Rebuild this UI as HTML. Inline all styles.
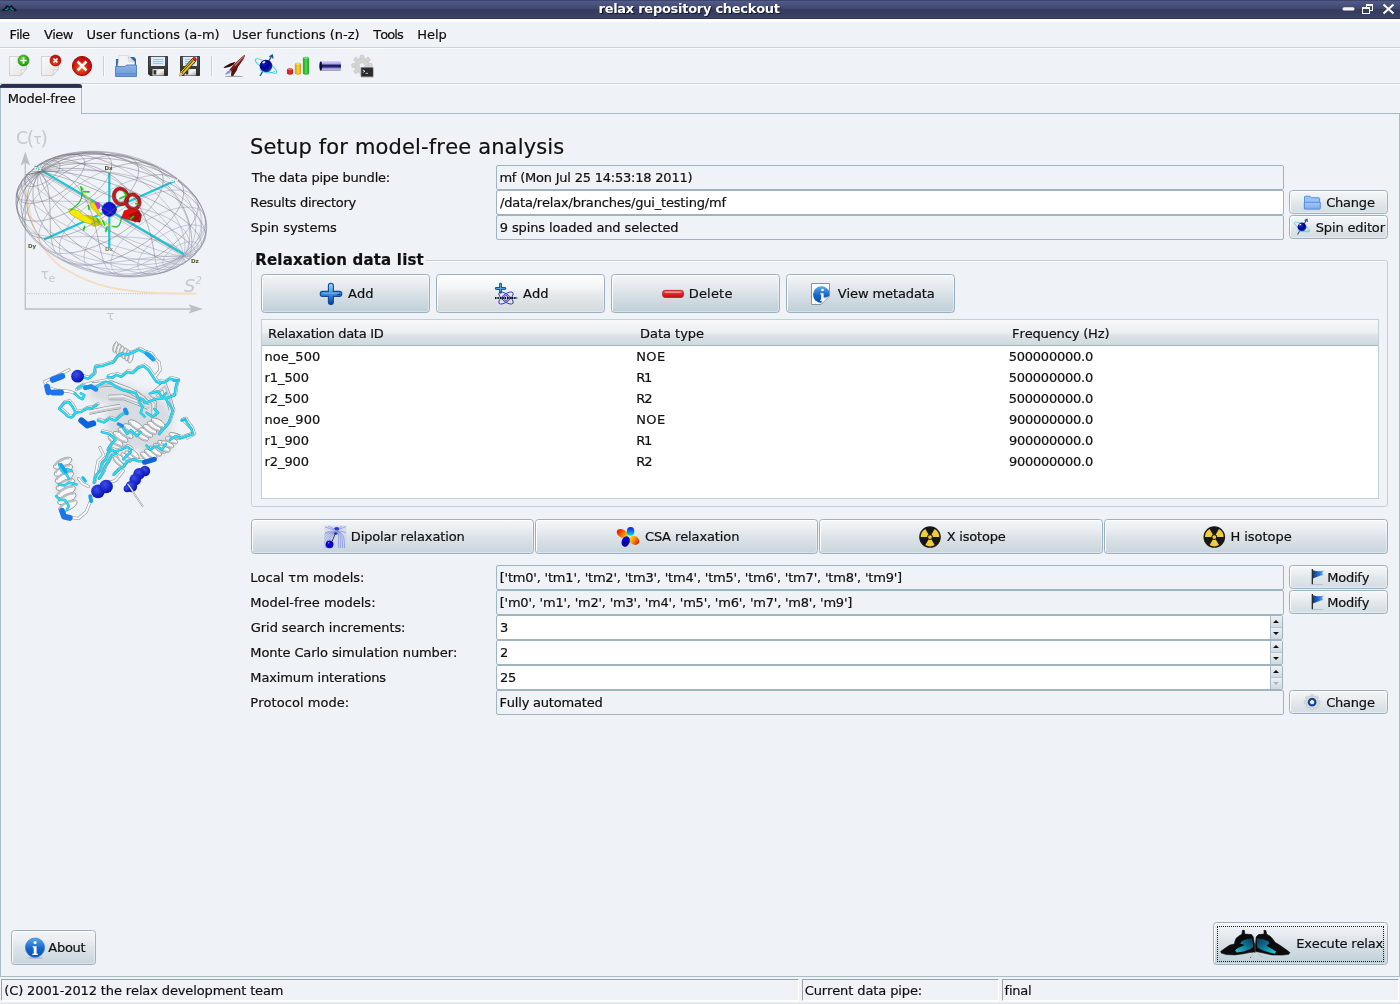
<!DOCTYPE html>
<html><head><meta charset="utf-8"><title>relax repository checkout</title>
<style>
html,body{margin:0;padding:0}
body{width:1400px;height:1004px;overflow:hidden;background:#eff2f7;font-family:"DejaVu Sans","Liberation Sans",sans-serif;font-size:13px;color:#101010;position:relative;font-kerning:none}
.abs,.t,.field,.btn,.sb,.spin{position:absolute}
#root{position:absolute;left:0;top:0;width:1400px;height:1004px;will-change:transform}
.t{white-space:nowrap;-webkit-text-stroke:.2px currentColor}
#titlebar{left:0;top:0;width:1400px;height:19px;background:linear-gradient(#3e4569 0,#3e4569 1px,#515b8c 1px,#48507c 5px,#3f466c 9px,#353b5d 9.5px,#383e62 14px,#3e456a 18px,#30365a 18px,#30365a 19px)}
.hline{left:0;width:1400px;height:1px}
.field{left:496px;width:786px;height:23px;border:1px solid #9fb3c1;border-radius:2px;background:#eff2f7}
.field.w{background:#fff}
.btn{border:1px solid #9bb0c0;border-radius:3.5px;background:linear-gradient(#f3f5f8 0,#e6eaee 30%,#d9e1e7 50%,#bfcfd7 100%);box-sizing:border-box;box-shadow:inset 1px 1px 0 #fff,inset -1px -1px 0 rgba(255,255,255,.35)}
.sb{height:22px;box-sizing:border-box;border-top:1px solid #9da2a6;border-left:1px solid #9da2a6;border-right:1px solid #fff;border-bottom:1px solid #fff}
.spin{left:1270px;width:11px;height:23px;border-left:1px solid #a9bac6;background:linear-gradient(#eef1f4 0,#d3dbe0 11px,#b9c6ce 11px,#b9c6ce 12px,#eceff2 12px,#d0d9de 23px)}
.spin i{position:absolute;left:2px;width:0;height:0;border-left:3.5px solid transparent;border-right:3.5px solid transparent}
.spin .up{top:3.500px;border-bottom:3.500px solid #111}
.spin .dn{top:15.500px;border-top:3.500px solid #111}
.spin .dn.dis{border-top-color:#a9b6be}
.field.s{width:785px}
</style></head><body>
<div id="root">
<div id="titlebar" class="abs"></div>
<div class="abs" style="left:0;top:19px;width:1400px;height:3px;background:#fff"></div>
<div class="t" style="left:598.51px;top:1px;font-size:13px;line-height:15px;letter-spacing:-0.276px;font-weight:bold;color:#fff;text-shadow:1px 1px 0 #14172c;-webkit-text-stroke:0;">relax repository checkout</div>
<svg class="abs" style="left:0;top:0" width="1400" height="19" viewBox="0 0 1400 19">
<g fill="none" stroke="#fff">
<rect x="1342.5" y="7.3" width="12" height="3.2" rx="1.6" fill="#f4f4f6" stroke="none"/>
<rect x="1366.5" y="4.5" width="6" height="6" stroke-width="1"/><rect x="1366" y="4" width="7" height="2" fill="#fff" stroke="none"/>
<rect x="1362.5" y="7.8" width="7" height="5.7" fill="#363c5f" stroke-width="1"/><rect x="1362" y="7.3" width="8" height="1.6" fill="#fff" stroke="none"/>
<path d="M1383.5 4.5 L1393.5 13.5 M1393.5 4.5 L1383.5 13.5" stroke-width="2"/>
</g>
<use href="#bfly" transform="translate(2 5) scale(.214 .232) translate(-1220.700 -930.300)"/>
</svg>
<div class="t" style="left:9.42px;top:27px;font-size:13px;line-height:15px;letter-spacing:-0.744px;">File</div>
<div class="t" style="left:43.90px;top:27px;font-size:13px;line-height:15px;letter-spacing:-0.563px;">View</div>
<div class="t" style="left:86.47px;top:27px;font-size:13px;line-height:15px;letter-spacing:-0.005px;">User functions (a-m)</div>
<div class="t" style="left:232.37px;top:27px;font-size:13px;line-height:15px;letter-spacing:-0.028px;">User functions (n-z)</div>
<div class="t" style="left:373.34px;top:27px;font-size:13px;line-height:15px;letter-spacing:-0.934px;">Tools</div>
<div class="t" style="left:417.22px;top:27px;font-size:13px;line-height:15px;letter-spacing:-0.050px;">Help</div>
<div class="abs hline" style="top:47px;background:#cdd5d9"></div><div class="abs hline" style="top:48px;background:#fbfcfd"></div>
<div class="abs hline" style="top:83px;background:#cdd5d9"></div><div class="abs hline" style="top:84px;background:#fbfcfd"></div>
<svg class="abs" style="left:0;top:48px" width="400" height="36" viewBox="0 48 400 36">
<defs>
<linearGradient id="gdoc" x1="0" y1="0" x2="1" y2="1"><stop offset="0" stop-color="#fafafa"/><stop offset="1" stop-color="#e3e3e3"/></linearGradient>
<radialGradient id="ggreen" cx=".4" cy=".35" r=".7"><stop offset="0" stop-color="#5fd83a"/><stop offset="1" stop-color="#1c8f10"/></radialGradient>
<radialGradient id="gred" cx=".45" cy=".6" r=".6"><stop offset="0" stop-color="#f2701c"/><stop offset=".6" stop-color="#d8180c"/><stop offset="1" stop-color="#a80c0c"/></radialGradient>
<linearGradient id="gfold" x1="0" y1="0" x2="0" y2="1"><stop offset="0" stop-color="#8db4e6"/><stop offset="1" stop-color="#6d98d2"/></linearGradient>
<linearGradient id="gflop" x1="0" y1="0" x2="0" y2="1"><stop offset="0" stop-color="#555"/><stop offset="1" stop-color="#2a2a2a"/></linearGradient>
<linearGradient id="gmet" x1="0" y1="0" x2="1" y2="1"><stop offset="0" stop-color="#c8c8c8"/><stop offset=".5" stop-color="#f4f4f4"/><stop offset="1" stop-color="#aaa"/></linearGradient>
<radialGradient id="gball" cx=".35" cy=".3" r=".8"><stop offset="0" stop-color="#1a1acc"/><stop offset=".5" stop-color="#000088"/><stop offset=".85" stop-color="#1030b0"/><stop offset="1" stop-color="#5aa0ff"/></radialGradient>
<linearGradient id="gpipe" x1="0" y1="0" x2="0" y2="1"><stop offset="0" stop-color="#e0d8fa"/><stop offset=".25" stop-color="#b4a8ec"/><stop offset=".45" stop-color="#1a1a62"/><stop offset=".6" stop-color="#2a2a80"/><stop offset=".8" stop-color="#c4bce4"/><stop offset="1" stop-color="#9c98b8"/></linearGradient>
<linearGradient id="gbr" x1="0" y1="0" x2="1" y2="0"><stop offset="0" stop-color="#c01010"/><stop offset=".5" stop-color="#f03030"/><stop offset="1" stop-color="#c01010"/></linearGradient>
<linearGradient id="gby" x1="0" y1="0" x2="1" y2="0"><stop offset="0" stop-color="#d89a08"/><stop offset=".5" stop-color="#ffd83a"/><stop offset="1" stop-color="#d89a08"/></linearGradient>
<linearGradient id="gbg" x1="0" y1="0" x2="1" y2="0"><stop offset="0" stop-color="#18a018"/><stop offset=".5" stop-color="#50e050"/><stop offset="1" stop-color="#18a018"/></linearGradient>
</defs>
<!-- new doc -->
<g id="docn"><path d="M9.500 56.500 H21 L26.500 62 V68.500 L21 75.500 H9.500Z" fill="url(#gdoc)" stroke="#c8c8c8" stroke-width=".8"/><path d="M20.500 75.200 L26.300 69 C24 70.200 22.500 70.300 21.200 69.800 C21.800 71.800 21.500 73.500 20.500 75.200Z" fill="#fdfdfd" stroke="#c0c0c0" stroke-width=".6"/></g>
<circle cx="23.500" cy="60.500" r="5.500" fill="url(#ggreen)" stroke="#1a8a12" stroke-width=".6"/><path d="M20.300 60.500 H26.700 M23.500 57.300 V63.700" stroke="#fff" stroke-width="1.700"/>
<!-- close doc -->
<g transform="translate(32,0)"><path d="M9.500 56.500 H21 L26.500 62 V68.500 L21 75.500 H9.500Z" fill="url(#gdoc)" stroke="#c8c8c8" stroke-width=".8"/><path d="M20.500 75.200 L26.300 69 C24 70.200 22.500 70.300 21.200 69.800 C21.800 71.800 21.500 73.500 20.500 75.200Z" fill="#fdfdfd" stroke="#c0c0c0" stroke-width=".6"/>
<circle cx="23.500" cy="60.500" r="5.500" fill="url(#gred)" stroke="#a00c0c" stroke-width=".6"/><path d="M21.500 58.500 L25.500 62.500 M25.500 58.500 L21.500 62.500" stroke="#fff" stroke-width="1.600"/></g>
<!-- big red x -->
<circle cx="82" cy="66" r="9.600" fill="url(#gred)" stroke="#a00a0a" stroke-width="1"/><path d="M77.500 61.500 L86.500 70.500 M86.500 61.500 L77.500 70.500" stroke="#fff" stroke-width="2.600"/>
<!-- sep -->
<rect x="103" y="56" width="1" height="20" fill="#c6d0d4"/><rect x="104" y="56" width="1" height="20" fill="#fbfcfd"/>
<!-- open -->
<path d="M116 59 H119 V57 H134 L136 59 V66 H116Z" fill="#2c64b4"/>
<path d="M119 55.500 H128 L134.500 62 V68 H117.500 Z" fill="#f4f4f4" stroke="#cfcfcf" stroke-width=".6"/><path d="M128 55.500 L134.500 62 H129 Z" fill="#e0e0e0" stroke="#c8c8c8" stroke-width=".5"/>
<path d="M115.500 66.500 H125 L126.500 65 H136.500 V76.500 H115.500Z" fill="url(#gfold)" stroke="#4a7cc4" stroke-width=".9"/><rect x="116" y="73.300" width="20" height="1" fill="#5a88c8"/>
<!-- save -->
<g id="flop"><path d="M148.500 56.500 H167.500 V75.500 H150 L148.500 74Z" fill="url(#gflop)" stroke="#1c1c1c" stroke-width=".8"/><rect x="151" y="56.800" width="14" height="9.200" fill="#dfeaf8"/><path d="M153 59.500 H163 M153 61.500 H163 M153 63.500 H163" stroke="#8eb4e0" stroke-width=".8"/><rect x="152.500" y="69" width="11.500" height="6.500" fill="url(#gmet)"/><rect x="153.500" y="70.200" width="2.800" height="4.300" fill="#333"/></g>
<!-- save as -->
<g transform="translate(32,0)"><path d="M148.500 56.500 H167.500 V75.500 H150 L148.500 74Z" fill="url(#gflop)" stroke="#1c1c1c" stroke-width=".8"/><rect x="151" y="56.800" width="14" height="9.200" fill="#dfeaf8"/><path d="M153 59.500 H163 M153 61.500 H163 M153 63.500 H163" stroke="#8eb4e0" stroke-width=".8"/><rect x="152.500" y="69" width="11.500" height="6.500" fill="url(#gmet)"/><rect x="153.500" y="70.200" width="2.800" height="4.300" fill="#333"/></g>
<g><path d="M192.500 58.500 L195.500 61.500 L183.500 74.500 L180.500 71.500Z" fill="#f0c020" stroke="#222" stroke-width=".9"/><path d="M193.200 60.200 L181.500 73" stroke="#222" stroke-width=".9"/><path d="M192.500 58.500 L193.800 57.300 C195 56.800 196.800 58.500 196.500 59.800 L195.500 61.500Z" fill="#e01818" stroke="#b01010" stroke-width=".5"/><path d="M180.500 71.500 L183.500 74.500 L179.300 76.200Z" fill="#e8c890" stroke="#8a6a30" stroke-width=".5"/></g>
<!-- sep -->
<rect x="211" y="56" width="1" height="20" fill="#c6d0d4"/><rect x="212" y="56" width="1" height="20" fill="#fbfcfd"/>
<!-- rocket -->
<ellipse cx="234" cy="76.400" rx="9.500" ry=".7" fill="#9ea2a8"/>
<path d="M230.00 69.75 L227.00 71.50 L225.00 74.50 L226.50 74.75 L229.50 73.25 L232.00 71.25Z" fill="#7a96dc" stroke="#e4d4d8" stroke-width=".6"/>
<path d="M235.50 61.75 L230.00 63.50 L223.50 67.25 L224.75 68.00 L230.00 66.75 L233.50 64.75Z" fill="#2e0a08"/>
<path d="M245.00 54.90 L243.50 55.50 L238.00 60.50 L234.00 64.50 L229.50 69.50 L232.00 71.50 L235.00 70.50 L239.50 65.00 L243.25 59.50 L245.00 56.00Z" fill="#7c1812"/>
<path d="M244.25 55.50 L238.50 61.10 L234.50 65.50 L235.25 66.00 L239.50 61.50 L244.65 56.00Z" fill="#d8b8b4" opacity=".8"/>
<path d="M238.50 64.50 L237.00 70.00 L233.00 76.25 L231.25 75.25 L233.00 71.00 L235.00 68.00Z" fill="#5c120e"/>
<path d="M235.00 68.00 L233.00 71.50 L232.00 76.00 L231.00 75.25 L231.50 71.50Z" fill="#3c0c0a"/>
<!-- spin -->
<path d="M260 76 L272 55.500" stroke="#1c5a8c" stroke-width="1.400"/><path d="M269.300 56.800 L272.300 55 L273 58.500" stroke="#1c5a8c" stroke-width="1.300" fill="none"/>
<ellipse cx="266" cy="66" rx="12.500" ry="3.600" transform="rotate(32 266 66)" fill="none" stroke="#30d0e0" stroke-width=".9"/>
<circle cx="266" cy="66" r="6.300" fill="url(#gball)"/><ellipse cx="263.800" cy="62.300" rx="1.600" ry=".9" transform="rotate(-30 263.800 62.300)" fill="#fff"/>
<path d="M259.500 69 C263 73 270 74 275 71.500" fill="none" stroke="#30d0e0" stroke-width=".9"/>
<!-- bars -->
<rect x="287.300" y="68.800" width="5.400" height="5.400" rx="1.300" fill="url(#gbr)" stroke="#b00c0c" stroke-width=".6"/><ellipse cx="290" cy="69.500" rx="2.500" ry=".8" fill="#f86060"/>
<rect x="295.300" y="63.300" width="5.400" height="10.900" rx="1.300" fill="url(#gby)" stroke="#c8900a" stroke-width=".6"/><ellipse cx="298" cy="64" rx="2.500" ry=".8" fill="#ffe878"/>
<rect x="303.300" y="57.300" width="5.400" height="16.900" rx="1.300" fill="url(#gbg)" stroke="#12900e" stroke-width=".6"/><ellipse cx="306" cy="58" rx="2.500" ry=".8" fill="#88f088"/>
<!-- pipe -->
<rect x="319.600" y="61" width="21.400" height="10" rx="1.500" fill="url(#gpipe)"/><ellipse cx="320.800" cy="66" rx="1.300" ry="4.600" fill="#0c0c30"/>
<!-- gear -->
<g fill="#d4d4d4" stroke="#c2c2c2" stroke-width=".5"><circle cx="362" cy="65.500" r="7.600"/>
<g id="tooth"><rect x="360" y="55.200" width="4" height="4" rx=".8"/><rect x="360" y="71.800" width="4" height="4" rx=".8"/><rect x="351.700" y="63.500" width="4" height="4" rx=".8"/><rect x="368.300" y="63.500" width="4" height="4" rx=".8"/></g>
<use href="#tooth" transform="rotate(45 362 65.500)"/></g>
<circle cx="362" cy="65.500" r="2.800" fill="#eff2f7" stroke="#bdbdbd" stroke-width=".5"/>
<rect x="361.200" y="67.800" width="11.800" height="8.600" fill="#2a2a2a" stroke="#555" stroke-width=".7"/><path d="M362.800 70 L365 71.200 L362.800 72.400 M365.500 73.300 H368" stroke="#f0f0f0" stroke-width=".8" fill="none"/>
<rect x="361" y="77" width="12.500" height=".8" fill="#b8bcc0" opacity=".7"/>
</svg>
<div class="abs" style="left:0;top:113px;width:1400px;height:864px;border:1px solid #a8bcc6;box-sizing:border-box"></div>
<div class="abs" style="left:0;top:84px;width:82px;height:30px;background:#eff2f7;border:1px solid #a8bcc6;border-bottom:none;border-radius:3px 3px 0 0;box-sizing:border-box"></div>
<div class="abs" style="left:0;top:84px;width:82px;height:4px;background:linear-gradient(#2d3254 0,#282d4e 75%,#4a4f70 100%);border-radius:3px 3px 0 0"></div>
<div class="t" style="left:7.72px;top:91px;font-size:13px;line-height:15px;letter-spacing:-0.186px;">Model-free</div>
<svg class="abs" style="left:0;top:115px" width="240" height="420" viewBox="0 115 240 420">
<defs>
<radialGradient id="lb1" cx=".4" cy=".35" r=".7"><stop offset="0" stop-color="#3c4cf0"/><stop offset="1" stop-color="#0410a8"/></radialGradient>
<linearGradient id="lrib" x1="0" y1="0" x2="1" y2="1"><stop offset="0" stop-color="#fbfcfd"/><stop offset=".5" stop-color="#d4d8dc"/><stop offset="1" stop-color="#f4f6f8"/></linearGradient>
</defs>
<g fill="none" stroke="#bcc0c4" stroke-width="1.3"><path d="M25.300 158 V309 H192"/></g>
<path d="M25.300 151.400 L20.600 165.500 L25.300 162.500 L30 165.500Z M203 308.900 L188.500 304.200 L191.500 308.900 L188.500 313.600Z" fill="#bcc0c4"/>
<path d="M27 293.600 H196" stroke="#bfc3c7" stroke-width="1.200" stroke-dasharray="1 1.300" fill="none"/>
<path d="M25.900 189 C28 205 32 226 38.500 239.200 C46 255 58 266 67.700 270.600 C82 279 98 285 109.600 287.300 C125 290.500 140 292 151.400 292.700 C165 293.400 180 293.600 196.300 293.600" stroke="#f7dcbc" stroke-width="1.700" fill="none"/>
<g fill="#c6cace" font-family="'DejaVu Sans',sans-serif" font-weight="normal">
<text x="16" y="143.500" font-size="17.500">C<tspan dx="-1.500" font-size="19" dy="1">(</tspan><tspan font-size="14" dy="-1" dx="-1">τ</tspan><tspan dx="-1" font-size="19" dy="1">)</tspan></text>
<text x="40.500" y="279" font-size="14">τ<tspan font-size="11" dy="3" dx="-.5">e</tspan></text>
<text x="184" y="292" font-size="18" font-style="italic">S<tspan font-size="10" dy="-8">2</tspan></text>
<text x="106.500" y="319.500" font-size="13">τ</text>
</g>
<path d="M183.2 256.3 L188.4 253.7 L193.0 250.8 L197.0 247.6 L200.4 244.1 L203.0 240.5 L205.0 236.6 L206.2 232.5 L206.8 228.3 L206.6 224.0 L205.6 219.7 L204.0 215.2 L201.7 210.8 M20.9 217.4 L24.0 221.8 L27.7 226.1 L32.0 230.4 L36.9 234.5 L42.5 238.5 L48.5 242.3 L55.0 245.9 L61.9 249.2 L69.2 252.3 L76.9 255.0 L84.8 257.5 L92.9 259.6 L101.1 261.4 L109.4 262.8 L117.7 263.9 L126.0 264.6 L134.2 264.9 L142.2 264.8 L149.9 264.3 L157.4 263.4 L164.5 262.2 L171.2 260.6 L177.5 258.6 L183.2 256.3 M183.2 256.3 L188.2 253.0 L192.7 249.3 L196.5 245.4 L199.6 241.3 L202.1 236.9 L203.9 232.4 L205.0 227.7 L205.4 222.9 L205.1 218.1 L204.0 213.2 L202.3 208.4 L199.8 203.5 L196.7 198.8 M25.9 229.4 L29.7 234.0 L34.1 238.5 L39.1 242.8 L44.6 246.9 L50.6 250.7 L57.1 254.2 L64.0 257.5 L71.3 260.4 L78.9 262.9 L86.7 265.1 L94.7 266.9 L102.8 268.3 L111.0 269.3 L119.2 269.8 L127.4 270.0 L135.4 269.7 L143.2 269.0 L150.8 267.8 L158.1 266.3 L165.1 264.4 L171.6 262.0 L177.6 259.4 L183.2 256.3 M183.2 256.3 L187.7 252.5 L191.6 248.3 L194.8 243.9 L197.5 239.3 L199.5 234.4 L200.8 229.4 L201.4 224.3 L201.4 219.1 L200.6 213.9 L199.2 208.7 L197.1 203.5 L194.4 198.4 L191.0 193.4 L187.0 188.6 M35.6 239.6 L40.1 244.2 L45.2 248.6 L50.8 252.8 L56.9 256.6 L63.4 260.1 L70.2 263.3 L77.4 266.1 L84.8 268.5 L92.4 270.5 L100.1 272.0 L108.0 273.1 L115.8 273.8 L123.7 274.0 L131.4 273.8 L139.0 273.1 L146.4 271.9 L153.5 270.3 L160.3 268.3 L166.7 265.9 L172.7 263.1 L178.2 259.9 L183.2 256.3 M183.2 256.3 L186.8 252.2 L189.8 247.8 L192.3 243.1 L194.1 238.2 L195.2 233.1 L195.8 227.9 L195.7 222.6 L194.9 217.2 L193.6 211.8 L191.5 206.4 L188.9 201.0 L185.7 195.8 L181.9 190.7 L177.6 185.8 L172.8 181.1 L167.5 176.6 M55.1 251.6 L60.8 255.8 L66.9 259.6 L73.3 263.1 L80.0 266.2 L87.0 269.0 L94.2 271.3 L101.4 273.2 L108.8 274.6 L116.2 275.6 L123.5 276.1 L130.7 276.1 L137.8 275.7 L144.7 274.8 L151.4 273.4 L157.7 271.6 L163.7 269.3 L169.3 266.7 L174.4 263.6 L179.1 260.1 L183.2 256.3 M183.2 256.3 L185.7 252.2 L187.6 247.8 L188.9 243.1 L189.6 238.3 L189.7 233.2 L189.3 228.0 L188.2 222.6 L186.6 217.3 L184.4 211.8 L181.6 206.5 L178.3 201.1 L174.5 195.9 L170.2 190.8 L165.4 185.9 L160.3 181.2 L154.7 176.7 L148.9 172.5 L142.7 168.7 M79.9 259.5 L86.3 263.0 L92.9 266.2 L99.6 268.9 L106.4 271.2 L113.2 273.1 L120.1 274.5 L126.8 275.5 L133.5 276.0 L139.9 276.1 L146.2 275.6 L152.2 274.7 L157.9 273.4 L163.2 271.6 L168.1 269.3 L172.6 266.6 L176.7 263.6 L180.2 260.1 L183.2 256.3 M183.2 256.3 L184.4 252.5 L184.9 248.4 L185.0 244.0 L184.4 239.3 L183.3 234.5 L181.7 229.6 L179.5 224.5 L176.8 219.3 L173.6 214.1 L170.0 208.9 L165.9 203.7 L161.3 198.6 L156.4 193.7 L151.2 188.9 L145.6 184.2 L139.8 179.8 L133.8 175.7 L127.6 171.9 L121.2 168.3 L114.8 165.2 M107.8 263.0 L114.2 265.8 L120.6 268.2 L127.0 270.2 L133.2 271.8 L139.2 272.9 L145.1 273.6 L150.7 273.8 L155.9 273.6 L160.9 272.9 L165.4 271.8 L169.6 270.2 L173.3 268.2 L176.6 265.8 L179.3 263.0 L181.5 259.9 L183.2 256.3 M183.2 256.3 L182.9 253.0 L182.1 249.4 L180.8 245.5 L178.9 241.4 L176.5 237.1 L173.6 232.6 L170.2 227.9 L166.4 223.2 L162.1 218.4 L157.5 213.5 L152.5 208.7 L147.3 203.9 L141.7 199.2 L135.9 194.6 L129.9 190.1 L123.8 185.8 L117.6 181.7 L111.3 177.9 L105.0 174.4 L98.8 171.1 L92.7 168.2 L86.7 165.7 M135.9 262.5 L141.7 264.7 L147.3 266.5 L152.5 268.0 L157.5 269.0 L162.1 269.5 L166.4 269.7 L170.2 269.4 L173.6 268.8 L176.5 267.7 L178.9 266.2 L180.8 264.3 L182.1 262.0 L182.9 259.3 L183.2 256.3 M183.2 256.3 L181.5 253.8 L179.3 250.9 L176.6 247.7 L173.3 244.3 L169.6 240.7 L165.4 236.9 L160.9 232.8 L155.9 228.7 L150.7 224.4 L145.1 220.1 L139.2 215.7 L133.2 211.3 L127.0 206.9 L120.6 202.6 L114.2 198.3 L107.8 194.2 L101.4 190.2 L95.0 186.5 L88.8 182.9 L82.8 179.5 L77.0 176.5 L71.4 173.7 L66.2 171.2 L61.3 169.0 M161.3 259.2 L165.9 261.0 L170.0 262.4 L173.6 263.5 L176.8 264.2 L179.5 264.5 L181.7 264.5 L183.3 264.1 L184.4 263.2 L185.0 262.0 L184.9 260.5 L184.4 258.6 L183.2 256.3 M183.2 256.3 L180.2 254.7 L176.7 252.7 L172.6 250.4 L168.1 247.9 L163.2 245.1 L157.9 242.1 L152.2 238.8 L146.2 235.4 L139.9 231.8 L133.5 228.0 L126.8 224.2 L120.1 220.3 L113.2 216.3 L106.4 212.4 L99.6 208.4 L92.9 204.5 L86.3 200.6 L79.9 196.9 L73.7 193.3 L67.9 189.8 L62.3 186.5 L57.2 183.5 L52.4 180.6 L48.1 178.1 L44.3 175.8 M178.3 252.4 L181.6 254.4 L184.4 256.1 L186.6 257.5 L188.2 258.6 L189.3 259.3 L189.7 259.7 L189.6 259.7 L188.9 259.4 L187.6 258.7 L185.7 257.7 L183.2 256.3 M183.2 256.3 L179.1 255.7 L174.4 254.7 L169.3 253.4 L163.7 251.9 L157.7 250.0 L151.4 247.9 L144.7 245.5 L137.8 242.8 L130.7 240.0 L123.5 236.9 L116.2 233.7 L108.8 230.3 L101.4 226.8 L94.2 223.2 L87.0 219.6 L80.0 215.9 L73.3 212.2 L66.9 208.5 L60.8 204.8 L55.1 201.2 L49.8 197.7 L45.0 194.4 L40.7 191.1 L36.9 188.1 L33.7 185.3 M188.9 242.9 L191.5 245.6 L193.6 248.0 L194.9 250.1 L195.7 251.9 L195.8 253.5 L195.2 254.8 L194.1 255.7 L192.3 256.4 L189.8 256.7 L186.8 256.7 L183.2 256.3 M183.2 256.3 L178.2 256.7 L172.7 256.8 L166.7 256.5 L160.3 255.9 L153.5 255.0 L146.4 253.8 L139.0 252.3 L131.4 250.5 L123.7 248.4 L115.8 246.1 L108.0 243.5 L100.1 240.7 L92.4 237.7 L84.8 234.5 L77.4 231.1 L70.2 227.7 L63.4 224.1 L56.9 220.4 L50.8 216.7 L45.2 213.0 L40.1 209.3 L35.6 205.6 L31.6 202.0 L28.2 198.5 L25.5 195.1 L23.4 191.8 M199.2 236.4 L200.6 239.5 L201.4 242.4 L201.4 245.1 L200.8 247.5 L199.5 249.7 L197.5 251.6 L194.8 253.3 L191.6 254.6 L187.7 255.6 L183.2 256.3 M183.2 256.3 L177.6 257.7 L171.6 258.8 L165.1 259.5 L158.1 259.9 L150.8 259.9 L143.2 259.6 L135.4 258.9 L127.4 257.9 L119.2 256.6 L111.0 254.9 L102.8 253.0 L94.7 250.7 L86.7 248.1 L78.9 245.3 L71.3 242.3 L64.0 239.0 L57.1 235.6 L50.6 232.0 L44.6 228.2 L39.1 224.4 L34.1 220.4 L29.7 216.4 L25.9 212.4 L22.8 208.5 L20.3 204.5 L18.6 200.6 M204.0 227.6 L205.1 231.3 L205.4 235.0 L205.0 238.4 L203.9 241.7 L202.1 244.8 L199.6 247.7 L196.5 250.3 L192.7 252.6 L188.2 254.6 L183.2 256.3 M198.0 246.7 L197.9 245.7 L197.6 244.7 L197.1 243.9 L196.5 243.2 L195.6 242.6 L194.6 242.2 L193.4 241.9 L192.1 241.7 L190.7 241.7 L189.1 241.8 L187.5 242.1 L185.8 242.5 L184.0 243.0 L182.1 243.7 L180.3 244.4 L178.4 245.3 L176.6 246.3 L174.8 247.4 L173.1 248.5 L171.4 249.8 L169.9 251.0 L168.5 252.4 L167.1 253.7 L166.0 255.1 L165.0 256.4 L164.1 257.7 L163.5 259.0 L163.0 260.3 L162.7 261.5 L162.6 262.6 L162.7 263.6 L163.0 264.5 L163.5 265.3 L164.1 266.0 L165.0 266.6 L166.0 267.0 L167.1 267.3 L168.5 267.5 L169.9 267.5 L171.4 267.4 L173.1 267.2 L174.8 266.8 L176.6 266.2 L178.4 265.6 L180.3 264.8 L182.1 263.9 L184.0 262.9 L185.8 261.9 L187.5 260.7 L189.1 259.5 L190.7 258.2 L192.1 256.9 L193.4 255.5 L194.6 254.2 L195.6 252.8 L196.5 251.5 L197.1 250.2 L197.6 249.0 L197.9 247.8 L198.0 246.7 M205.8 234.4 L205.6 232.4 L205.0 230.7 L204.1 229.1 L202.8 227.8 L201.2 226.7 L199.3 225.8 L197.0 225.2 L194.5 224.9 L191.8 224.8 L188.8 225.1 L185.6 225.6 L182.3 226.3 L178.9 227.3 L175.3 228.6 L171.8 230.1 L168.2 231.8 L164.7 233.7 L161.3 235.7 L158.0 238.0 L154.8 240.3 L151.8 242.8 L149.1 245.3 L146.6 247.9 L144.3 250.5 L142.4 253.0 L140.8 255.6 L139.5 258.1 L138.6 260.5 L138.0 262.7 L137.8 264.9 L138.0 266.8 L138.6 268.6 L139.5 270.2 L140.8 271.5 L142.4 272.6 L144.3 273.5 L146.6 274.0 L149.1 274.4 L151.8 274.4 L154.8 274.2 L158.0 273.7 L161.3 272.9 L164.7 271.9 L168.2 270.7 L171.8 269.2 L175.3 267.5 L178.9 265.6 L182.3 263.5 L185.6 261.3 L188.8 258.9 L191.8 256.5 L194.5 254.0 L197.0 251.4 L199.3 248.8 L201.2 246.2 L202.8 243.7 L204.1 241.2 L205.0 238.8 L205.6 236.5 L205.8 234.4 M205.9 220.5 L205.6 217.7 L204.8 215.2 L203.5 213.0 L201.8 211.2 L199.5 209.6 L196.8 208.5 L193.7 207.6 L190.2 207.2 L186.3 207.1 L182.1 207.4 L177.7 208.1 L173.1 209.2 L168.3 210.6 L163.4 212.3 L158.4 214.4 L153.4 216.8 L148.5 219.4 L143.7 222.3 L139.1 225.4 L134.7 228.7 L130.5 232.2 L126.6 235.7 L123.1 239.3 L120.0 242.9 L117.3 246.5 L115.0 250.1 L113.2 253.6 L112.0 256.9 L111.2 260.1 L110.9 263.1 L111.2 265.8 L112.0 268.3 L113.2 270.5 L115.0 272.3 L117.3 273.9 L120.0 275.1 L123.1 275.9 L126.6 276.3 L130.5 276.4 L134.7 276.1 L139.1 275.4 L143.7 274.3 L148.5 272.9 L153.4 271.2 L158.4 269.1 L163.4 266.7 L168.3 264.1 L173.1 261.2 L177.7 258.1 L182.1 254.8 L186.3 251.4 L190.2 247.8 L193.7 244.2 L196.8 240.6 L199.5 237.0 L201.8 233.4 L203.5 229.9 L204.8 226.6 L205.6 223.4 L205.9 220.5 M190.7 193.0 L187.4 191.6 L183.6 190.6 L179.4 190.0 L174.8 190.0 L169.7 190.3 L164.4 191.2 L158.8 192.4 L153.1 194.1 L147.1 196.2 L141.2 198.7 L135.2 201.6 L129.3 204.8 L123.5 208.3 L117.9 212.0 L112.6 216.0 L107.6 220.1 L102.9 224.3 L98.7 228.7 L94.9 233.0 L91.7 237.4 L89.0 241.7 L86.8 245.9 L85.3 249.9 L84.3 253.7 L84.0 257.3 L84.3 260.6 L85.3 263.6 L86.8 266.2 L89.0 268.4 L91.7 270.3 L94.9 271.7 L98.7 272.7 L102.9 273.3 L107.6 273.3 L112.6 273.0 L117.9 272.1 L123.5 270.9 L129.3 269.2 L135.2 267.0 L141.2 264.5 L147.1 261.7 L153.1 258.5 L158.8 255.0 M152.6 175.2 L146.8 176.1 L140.7 177.4 L134.5 179.3 L128.0 181.6 L121.5 184.3 L115.0 187.4 L108.6 190.9 L102.3 194.7 L96.2 198.8 L90.4 203.1 L85.0 207.5 L79.9 212.2 L75.3 216.9 L71.2 221.6 L67.7 226.4 L64.7 231.0 L62.4 235.6 L60.7 240.0 L59.7 244.1 L59.4 248.0 L59.7 251.6 L60.7 254.8 L62.4 257.7 L64.7 260.2 L67.7 262.2 L71.2 263.7 L75.3 264.8 L79.9 265.4 L85.0 265.5 L90.4 265.1 L96.2 264.2 L102.3 262.8 L108.6 260.9 M114.0 167.3 L107.6 169.6 L101.1 172.3 L94.6 175.4 L88.1 178.9 L81.9 182.7 L75.8 186.7 L70.0 191.0 L64.5 195.5 L59.5 200.2 L54.9 204.9 L50.8 209.6 L47.2 214.4 L44.3 219.0 L41.9 223.6 L40.2 227.9 L39.2 232.1 L38.9 236.0 L39.2 239.6 L40.2 242.8 L41.9 245.7 L44.3 248.1 L47.2 250.2 L50.8 251.7 L54.9 252.8 L59.5 253.4 L64.5 253.5 L70.0 253.0 M63.8 173.2 L58.2 176.9 L52.9 180.9 L47.8 185.0 L43.2 189.3 L39.0 193.6 L35.2 198.0 L31.9 202.3 L29.2 206.6 L27.1 210.8 L25.5 214.8 L24.6 218.6 L24.3 222.2 L24.6 225.5 L25.5 228.5 L27.1 231.1 L29.2 233.4 L31.9 235.2 M186.3 254.8 L189.7 252.5 L192.9 249.9 L195.6 246.9 L197.8 243.7 L199.6 240.1 L200.8 236.4 L201.5 232.5 L201.5 228.4 L201.0 224.2 L199.8 220.0 L198.0 215.8 L195.5 211.6 L192.4 207.4 L188.7 203.4 L184.4 199.5 L179.6 195.8 L174.2 192.2 L168.3 188.9 L161.9 185.9 L155.1 183.1 L148.0 180.5 L140.6 178.3 L132.9 176.4 L125.1 174.7 L117.2 173.3 L109.2 172.2 L101.3 171.4 L93.4 170.8 L85.8 170.4 L78.4 170.2 L71.2 170.3 L64.5 170.4 M185.2 254.0 L187.2 250.9 L188.5 247.8 L189.2 244.5 L189.2 241.1 L188.4 237.8 L187.0 234.4 L184.9 231.1 L182.2 227.9 L178.7 224.9 L174.7 221.9 L170.0 219.1 L164.8 216.5 L159.1 214.1 L152.8 211.9 L146.2 209.9 L139.2 208.2 L131.9 206.7 L124.4 205.4 L116.7 204.3 L108.9 203.4 L101.1 202.7 L93.3 202.1 L85.6 201.8 L78.1 201.5 L70.8 201.3 L63.7 201.2 L57.1 201.2 L50.8 201.2 L44.9 201.2 L39.6 201.1 L34.7 201.0 L30.4 200.8 L26.6 200.5 L23.5 200.1 L20.9 199.5 M183.0 254.5 L182.1 252.4 L180.4 250.3 L178.1 248.3 L175.1 246.4 L171.5 244.7 L167.3 243.1 L162.6 241.7 L157.3 240.5 L151.6 239.5 L145.5 238.6 L139.0 237.9 L132.3 237.4 L125.3 237.0 L118.2 236.7 L111.0 236.6 L103.7 236.6 L96.5 236.6 L89.4 236.6 L82.5 236.7 L75.7 236.8 L69.2 236.8 L63.1 236.8 L57.2 236.7 L51.8 236.5 L46.8 236.1 L42.2 235.5 L38.1 234.8 L34.5 233.9 L31.4 232.7 L28.7 231.3 L26.5 229.7 L24.8 227.8 L23.5 225.7 M180.8 256.1 L177.3 256.0 L173.3 256.0 L168.9 256.1 L164.0 256.4 L158.8 256.8 L153.2 257.4 L147.4 258.0 L141.5 258.8 L135.4 259.5 L129.2 260.4 L123.1 261.2 L116.9 261.9 L110.9 262.7 L105.0 263.3 L99.3 263.8 L93.9 264.2 L88.7 264.4 L83.8 264.4 L79.2 264.2 L75.0 263.7 L71.1 263.0 L67.6 262.0 L64.5 260.7 L61.7 259.1 L59.3 257.2 L57.3 255.0 L55.5 252.4 L54.1 249.6 L53.0 246.5 M180.0 257.8 L175.8 259.6 L171.4 261.5 L166.8 263.4 L162.2 265.3 L157.6 267.1 L153.0 268.9 L148.4 270.5 L144.0 272.0 L139.6 273.3 L135.5 274.4 L131.5 275.2 L127.8 275.8 L124.3 276.1 L121.1 276.1 L118.1 275.7 L115.4 275.0 L113.0 273.9 L110.8 272.4 L108.9 270.6 L107.1 268.4 L105.6 265.9 L104.3 262.9 L103.1 259.7 M181.0 258.6 L178.3 261.2 L175.7 263.6 L173.2 265.8 L170.9 267.8 L168.7 269.5 L166.7 270.8 L164.9 271.8 L163.3 272.4 L161.8 272.6 L160.6 272.5 L159.5 271.9 L158.5 270.8 L157.7 269.4 L157.0 267.5 L156.4 265.2 L155.8 262.5 L155.2 259.4 L154.7 256.0 M183.3 258.0 L183.5 259.8 L183.8 261.1 L184.3 262.0 L184.9 262.5 L185.6 262.5 L186.4 262.1 L187.3 261.2 L188.2 259.8 L189.0 258.0 L189.8 255.7 L190.5 253.1 L191.1 250.0 L191.5 246.5 L191.7 242.7 L191.6 238.6 M185.4 256.5 L188.2 256.2 L190.9 255.4 L193.6 254.2 L196.1 252.5 L198.4 250.4 L200.6 247.8 L202.4 244.9 L204.0 241.6 L205.2 238.0 L206.0 234.0 L206.4 229.8 L206.4 225.4 L205.9 220.8 L204.8 216.1 L203.3 211.3 L201.1 206.5" fill="none" stroke="#9a9ab0" stroke-width=".55" opacity=".9"/>
<g stroke="#1cc6d6" stroke-width="2.200" fill="none"><path d="M34.5 166.4 L184.1 254.2 M44.0 239.6 L174.6 181.0 M109.3 247.9 L109.3 172.7"/></g>
<svg x="60" y="175" width="100" height="70" viewBox="0 0 1400 980">
<path d="M330 260 L420 340 L440 380 M540 560 L600 640 L680 700 L740 720" fill="none" stroke="#e4da00" stroke-width="16" stroke-linecap="round" stroke-linejoin="round"/>
<ellipse cx="520" cy="430" rx="42" ry="52" fill="#f020f0"/>
<path d="M120 480 L150 470 L260 500 L330 560 L420 570 L520 600 L580 660 L590 690 L470 720 L430 690 L340 660 L260 620 L140 540Z" fill="#f4ec00" stroke="#8c8600" stroke-width="6" stroke-linejoin="round"/>
<path d="M330 560 L420 570 L520 600 L580 660 L590 690 L470 720 L430 690 L440 640Z" fill="#d4ca00"/>
<path d="M430 380 L480 370 L500 420 L540 500 L580 560 L560 580 L500 520 L450 470 L425 420Z" fill="#e8de00" stroke="#8c8600" stroke-width="5" stroke-linejoin="round"/>
<path d="M290 170 L310 240 L300 330 L260 400 L200 450 L150 490 M740 720 L790 730 L830 700 L850 650 L860 590" fill="none" stroke="#22c422" stroke-width="17" stroke-linecap="round" stroke-linejoin="round"/>
<path d="M290 168 L318 200 M330 232 L408 236 M400 430 L405 480 M520 610 L550 660 M345 720 L330 770 M660 730 L640 790 M600 640 L625 700" fill="none" stroke="#18d818" stroke-width="24" stroke-linecap="round"/>
<g fill="none" stroke="#c41818" stroke-width="44"><ellipse cx="850" cy="300" rx="95" ry="110" transform="rotate(-15 850 300)"/><ellipse cx="1020" cy="375" rx="92" ry="104" transform="rotate(-20 1020 375)"/></g>
<g fill="none" stroke="#7c0a0a" stroke-width="7"><ellipse cx="850" cy="300" rx="118" ry="133" transform="rotate(-15 850 300)"/><ellipse cx="1020" cy="375" rx="115" ry="127" transform="rotate(-20 1020 375)"/><ellipse cx="850" cy="300" rx="72" ry="87" transform="rotate(-15 850 300)"/><ellipse cx="1020" cy="375" rx="69" ry="81" transform="rotate(-20 1020 375)"/></g>
<path d="M860 600 L900 500 L1000 470 L1100 490 L1140 560 L1120 660 L1040 650 L940 620Z" fill="#e01010" stroke="#7c0a0a" stroke-width="6" stroke-linejoin="round"/>
<path d="M960 560 L1100 500 L1140 560 L1120 660 L1040 650Z" fill="#a80c0c"/>
<path d="M840 330 L900 300 M900 250 L930 280 M1060 400 L1090 410 M990 610 L1030 580" fill="none" stroke="#18d818" stroke-width="24" stroke-linecap="round"/>
<circle cx="690" cy="480" r="100" fill="#1818dc"/><circle cx="690" cy="480" r="100" fill="none" stroke="#0a0a98" stroke-width="8" stroke-dasharray="16 12"/>
<g fill="none" stroke="#0c0ca8" stroke-width="6"><ellipse cx="690" cy="480" rx="100" ry="40"/><ellipse cx="690" cy="480" rx="40" ry="100"/><ellipse cx="690" cy="480" rx="100" ry="75"/><ellipse cx="690" cy="480" rx="75" ry="100"/></g>
</svg>
<path d="M201.7 210.8 L198.6 206.4 L194.9 202.1 L190.6 197.8 L185.7 193.7 L180.1 189.7 L174.1 185.9 L167.6 182.3 L160.7 179.0 L153.4 175.9 L145.7 173.2 L137.8 170.7 L129.7 168.6 L121.5 166.8 L113.2 165.4 L104.9 164.3 L96.6 163.6 L88.4 163.3 L80.4 163.4 L72.7 163.9 L65.2 164.8 L58.1 166.0 L51.4 167.6 L45.1 169.6 L39.4 171.9 L34.2 174.5 L29.6 177.4 L25.6 180.6 L22.2 184.1 L19.6 187.7 L17.6 191.6 L16.4 195.7 L15.8 199.9 L16.0 204.2 L17.0 208.5 L18.6 213.0 L20.9 217.4 M196.7 198.8 L192.9 194.2 L188.5 189.7 L183.5 185.4 L178.0 181.3 L172.0 177.5 L165.5 174.0 L158.6 170.7 L151.3 167.8 L143.7 165.3 L135.9 163.1 L127.9 161.3 L119.8 159.9 L111.6 158.9 L103.4 158.4 L95.2 158.2 L87.2 158.5 L79.4 159.2 L71.8 160.4 L64.5 161.9 L57.5 163.8 L51.0 166.2 L45.0 168.8 L39.4 171.9 L34.4 175.2 L29.9 178.9 L26.1 182.8 L23.0 186.9 L20.5 191.3 L18.7 195.8 L17.6 200.5 L17.2 205.3 L17.5 210.1 L18.6 215.0 L20.3 219.8 L22.8 224.7 L25.9 229.4 M187.0 188.6 L182.5 184.0 L177.4 179.6 L171.8 175.4 L165.7 171.6 L159.2 168.1 L152.4 164.9 L145.2 162.1 L137.8 159.7 L130.2 157.7 L122.5 156.2 L114.6 155.1 L106.8 154.4 L98.9 154.2 L91.2 154.4 L83.6 155.1 L76.2 156.3 L69.1 157.9 L62.3 159.9 L55.9 162.3 L49.9 165.1 L44.4 168.3 L39.4 171.9 L34.9 175.7 L31.0 179.9 L27.8 184.3 L25.1 188.9 L23.1 193.8 L21.8 198.8 L21.2 203.9 L21.2 209.1 L22.0 214.3 L23.4 219.5 L25.5 224.7 L28.2 229.8 L31.6 234.8 L35.6 239.6 M167.5 176.6 L161.8 172.4 L155.7 168.6 L149.3 165.1 L142.6 162.0 L135.6 159.2 L128.4 156.9 L121.2 155.0 L113.8 153.6 L106.4 152.6 L99.1 152.1 L91.9 152.1 L84.8 152.5 L77.9 153.4 L71.2 154.8 L64.9 156.6 L58.9 158.9 L53.3 161.5 L48.2 164.6 L43.5 168.1 L39.4 171.9 L35.8 176.0 L32.8 180.4 L30.3 185.1 L28.5 190.0 L27.4 195.1 L26.8 200.3 L26.9 205.6 L27.7 211.0 L29.0 216.4 L31.1 221.8 L33.7 227.2 L36.9 232.4 L40.7 237.5 L45.0 242.4 L49.8 247.1 L55.1 251.6 M142.7 168.7 L136.3 165.2 L129.7 162.0 L123.0 159.3 L116.2 157.0 L109.4 155.1 L102.5 153.7 L95.8 152.7 L89.1 152.2 L82.7 152.1 L76.4 152.6 L70.4 153.5 L64.7 154.8 L59.4 156.6 L54.5 158.9 L50.0 161.6 L45.9 164.6 L42.4 168.1 L39.4 171.9 L36.9 176.0 L35.0 180.4 L33.7 185.1 L33.0 189.9 L32.9 195.0 L33.3 200.2 L34.4 205.6 L36.0 210.9 L38.2 216.4 L41.0 221.7 L44.3 227.1 L48.1 232.3 L52.4 237.4 L57.2 242.3 L62.3 247.0 L67.9 251.5 L73.7 255.7 L79.9 259.5 M114.8 165.2 L108.4 162.4 L102.0 160.0 L95.6 158.0 L89.4 156.4 L83.4 155.3 L77.5 154.6 L71.9 154.4 L66.7 154.6 L61.7 155.3 L57.2 156.4 L53.0 158.0 L49.3 160.0 L46.0 162.4 L43.3 165.2 L41.1 168.3 L39.4 171.9 L38.2 175.7 L37.7 179.8 L37.6 184.2 L38.2 188.9 L39.3 193.7 L40.9 198.6 L43.1 203.7 L45.8 208.9 L49.0 214.1 L52.6 219.3 L56.7 224.5 L61.3 229.6 L66.2 234.5 L71.4 239.3 L77.0 244.0 L82.8 248.4 L88.8 252.5 L95.0 256.3 L101.4 259.9 L107.8 263.0 M86.7 165.7 L80.9 163.5 L75.3 161.7 L70.1 160.2 L65.1 159.2 L60.5 158.7 L56.2 158.5 L52.4 158.8 L49.0 159.4 L46.1 160.5 L43.7 162.0 L41.8 163.9 L40.5 166.2 L39.7 168.9 L39.4 171.9 L39.7 175.2 L40.5 178.8 L41.8 182.7 L43.7 186.8 L46.1 191.1 L49.0 195.6 L52.4 200.3 L56.2 205.0 L60.5 209.8 L65.1 214.7 L70.1 219.5 L75.3 224.3 L80.9 229.0 L86.7 233.6 L92.7 238.1 L98.8 242.4 L105.0 246.5 L111.3 250.3 L117.6 253.8 L123.8 257.1 L129.9 260.0 L135.9 262.5 M61.3 169.0 L56.7 167.2 L52.6 165.8 L49.0 164.7 L45.8 164.0 L43.1 163.7 L40.9 163.7 L39.3 164.1 L38.2 165.0 L37.6 166.2 L37.7 167.7 L38.2 169.6 L39.4 171.9 L41.1 174.4 L43.3 177.3 L46.0 180.5 L49.3 183.9 L53.0 187.5 L57.2 191.3 L61.7 195.4 L66.7 199.5 L71.9 203.8 L77.5 208.1 L83.4 212.5 L89.4 216.9 L95.6 221.3 L102.0 225.6 L108.4 229.9 L114.8 234.0 L121.2 238.0 L127.6 241.7 L133.8 245.3 L139.8 248.7 L145.6 251.7 L151.2 254.5 L156.4 257.0 L161.3 259.2 M44.3 175.8 L41.0 173.8 L38.2 172.1 L36.0 170.7 L34.4 169.6 L33.3 168.9 L32.9 168.5 L33.0 168.5 L33.7 168.8 L35.0 169.5 L36.9 170.5 L39.4 171.9 L42.4 173.5 L45.9 175.5 L50.0 177.8 L54.5 180.3 L59.4 183.1 L64.7 186.1 L70.4 189.4 L76.4 192.8 L82.7 196.4 L89.1 200.2 L95.8 204.0 L102.5 207.9 L109.4 211.9 L116.2 215.8 L123.0 219.8 L129.7 223.7 L136.3 227.6 L142.7 231.3 L148.9 234.9 L154.7 238.4 L160.3 241.7 L165.4 244.7 L170.2 247.6 L174.5 250.1 L178.3 252.4 M33.7 185.3 L31.1 182.6 L29.0 180.2 L27.7 178.1 L26.9 176.3 L26.8 174.7 L27.4 173.4 L28.5 172.5 L30.3 171.8 L32.8 171.5 L35.8 171.5 L39.4 171.9 L43.5 172.5 L48.2 173.5 L53.3 174.8 L58.9 176.3 L64.9 178.2 L71.2 180.3 L77.9 182.7 L84.8 185.4 L91.9 188.2 L99.1 191.3 L106.4 194.5 L113.8 197.9 L121.2 201.4 L128.4 205.0 L135.6 208.6 L142.6 212.3 L149.3 216.0 L155.7 219.7 L161.8 223.4 L167.5 227.0 L172.8 230.5 L177.6 233.8 L181.9 237.1 L185.7 240.1 L188.9 242.9 M23.4 191.8 L22.0 188.7 L21.2 185.8 L21.2 183.1 L21.8 180.7 L23.1 178.5 L25.1 176.6 L27.8 174.9 L31.0 173.6 L34.9 172.6 L39.4 171.9 L44.4 171.5 L49.9 171.4 L55.9 171.7 L62.3 172.3 L69.1 173.2 L76.2 174.4 L83.6 175.9 L91.2 177.7 L98.9 179.8 L106.8 182.1 L114.6 184.7 L122.5 187.5 L130.2 190.5 L137.8 193.7 L145.2 197.1 L152.4 200.5 L159.2 204.1 L165.7 207.8 L171.8 211.5 L177.4 215.2 L182.5 218.9 L187.0 222.6 L191.0 226.2 L194.4 229.7 L197.1 233.1 L199.2 236.4 M18.6 200.6 L17.5 196.9 L17.2 193.2 L17.6 189.8 L18.7 186.5 L20.5 183.4 L23.0 180.5 L26.1 177.9 L29.9 175.6 L34.4 173.6 L39.4 171.9 L45.0 170.5 L51.0 169.4 L57.5 168.7 L64.5 168.3 L71.8 168.3 L79.4 168.6 L87.2 169.3 L95.2 170.3 L103.4 171.6 L111.6 173.3 L119.8 175.2 L127.9 177.5 L135.9 180.1 L143.7 182.9 L151.3 185.9 L158.6 189.2 L165.5 192.6 L172.0 196.2 L178.0 200.0 L183.5 203.8 L188.5 207.8 L192.9 211.8 L196.7 215.8 L199.8 219.7 L202.3 223.7 L204.0 227.6 M198.3 206.0 L198.0 202.7 L197.1 199.7 L195.5 197.1 L193.4 194.8 L190.7 193.0 M158.8 255.0 L164.4 251.3 L169.7 247.3 L174.8 243.2 L179.4 238.9 L183.6 234.6 L187.4 230.2 L190.7 225.9 L193.4 221.6 L195.5 217.4 L197.1 213.4 L198.0 209.6 L198.3 206.0 M183.7 192.2 L183.4 188.6 L182.4 185.4 L180.7 182.5 L178.3 180.1 L175.4 178.0 L171.8 176.5 L167.7 175.4 L163.1 174.8 L158.1 174.7 L152.6 175.2 M108.6 260.9 L115.0 258.6 L121.5 255.9 L128.0 252.8 L134.5 249.3 L140.7 245.5 L146.8 241.5 L152.6 237.2 L158.1 232.7 L163.1 228.0 L167.7 223.3 L171.8 218.6 L175.4 213.8 L178.3 209.2 L180.7 204.6 L182.4 200.3 L183.4 196.1 L183.7 192.2 M163.2 180.2 L162.9 176.6 L161.9 173.4 L160.2 170.5 L157.9 168.0 L154.9 166.0 L151.4 164.5 L147.3 163.4 L142.7 162.8 L137.6 162.7 L132.2 163.1 L126.4 164.0 L120.3 165.4 L114.0 167.3 M70.0 253.0 L75.8 252.1 L81.9 250.8 L88.1 248.9 L94.6 246.6 L101.1 243.9 L107.6 240.8 L114.0 237.3 L120.3 233.5 L126.4 229.4 L132.2 225.1 L137.6 220.7 L142.7 216.0 L147.3 211.3 L151.4 206.6 L154.9 201.8 L157.9 197.2 L160.2 192.6 L161.9 188.2 L162.9 184.1 L163.2 180.2 M138.6 170.9 L138.3 167.6 L137.3 164.6 L135.8 162.0 L133.6 159.8 L130.9 157.9 L127.7 156.5 L123.9 155.5 L119.7 154.9 L115.0 154.9 L110.0 155.2 L104.7 156.1 L99.1 157.3 L93.3 159.0 L87.4 161.2 L81.4 163.7 L75.5 166.5 L69.5 169.7 L63.8 173.2 M31.9 235.2 L35.2 236.6 L39.0 237.6 L43.2 238.2 L47.8 238.2 L52.9 237.9 L58.2 237.0 L63.8 235.8 L69.5 234.1 L75.5 232.0 L81.4 229.5 L87.4 226.6 L93.3 223.4 L99.1 219.9 L104.7 216.2 L110.0 212.2 L115.0 208.1 L119.7 203.9 L123.9 199.5 L127.7 195.2 L130.9 190.8 L133.6 186.5 L135.8 182.3 L137.3 178.3 L138.3 174.5 L138.6 170.9 M111.7 165.1 L111.4 162.4 L110.6 159.9 L109.4 157.7 L107.6 155.9 L105.3 154.3 L102.6 153.1 L99.5 152.3 L96.0 151.9 L92.1 151.8 L87.9 152.1 L83.5 152.8 L78.9 153.9 L74.1 155.3 L69.2 157.0 L64.2 159.1 L59.2 161.5 L54.3 164.1 L49.5 167.0 L44.9 170.1 L40.5 173.4 L36.3 176.8 L32.4 180.4 L28.9 184.0 L25.8 187.6 L23.1 191.2 L20.8 194.8 L19.1 198.3 L17.8 201.6 L17.0 204.8 L16.7 207.7 L17.0 210.5 L17.8 213.0 L19.1 215.2 L20.8 217.0 L23.1 218.6 L25.8 219.7 L28.9 220.6 L32.4 221.0 L36.3 221.1 L40.5 220.8 L44.9 220.1 L49.5 219.0 L54.3 217.6 L59.2 215.9 L64.2 213.8 L69.2 211.4 L74.1 208.8 L78.9 205.9 L83.5 202.8 L87.9 199.5 L92.1 196.0 L96.0 192.5 L99.5 188.9 L102.6 185.3 L105.3 181.7 L107.6 178.1 L109.4 174.6 L110.6 171.3 L111.4 168.1 L111.7 165.1 M84.8 163.3 L84.6 161.4 L84.0 159.6 L83.1 158.0 L81.8 156.7 L80.2 155.6 L78.3 154.7 L76.0 154.2 L73.5 153.8 L70.8 153.8 L67.8 154.0 L64.6 154.5 L61.3 155.3 L57.9 156.3 L54.4 157.5 L50.8 159.0 L47.3 160.7 L43.7 162.6 L40.3 164.7 L37.0 166.9 L33.8 169.3 L30.8 171.7 L28.1 174.2 L25.6 176.8 L23.3 179.4 L21.4 182.0 L19.8 184.5 L18.5 187.0 L17.6 189.4 L17.0 191.7 L16.8 193.8 L17.0 195.8 L17.6 197.5 L18.5 199.1 L19.8 200.4 L21.4 201.5 L23.3 202.4 L25.6 203.0 L28.1 203.3 L30.8 203.4 L33.8 203.1 L37.0 202.6 L40.3 201.9 L43.7 200.9 L47.3 199.6 L50.8 198.1 L54.4 196.4 L57.9 194.5 L61.3 192.5 L64.6 190.2 L67.8 187.9 L70.8 185.4 L73.5 182.9 L76.0 180.3 L78.3 177.7 L80.2 175.2 L81.8 172.6 L83.1 170.1 L84.0 167.7 L84.6 165.5 L84.8 163.3 M60.0 165.6 L59.9 164.6 L59.6 163.7 L59.1 162.9 L58.5 162.2 L57.6 161.6 L56.6 161.2 L55.5 160.9 L54.1 160.7 L52.7 160.7 L51.2 160.8 L49.5 161.0 L47.8 161.4 L46.0 162.0 L44.2 162.6 L42.3 163.4 L40.5 164.3 L38.6 165.3 L36.8 166.3 L35.1 167.5 L33.5 168.7 L31.9 170.0 L30.5 171.3 L29.2 172.7 L28.0 174.0 L27.0 175.4 L26.1 176.7 L25.5 178.0 L25.0 179.2 L24.7 180.4 L24.6 181.5 L24.7 182.5 L25.0 183.5 L25.5 184.3 L26.1 185.0 L27.0 185.6 L28.0 186.0 L29.2 186.3 L30.5 186.5 L31.9 186.5 L33.5 186.4 L35.1 186.1 L36.8 185.7 L38.6 185.2 L40.5 184.5 L42.3 183.8 L44.2 182.9 L46.0 181.9 L47.8 180.8 L49.5 179.7 L51.2 178.4 L52.7 177.2 L54.1 175.8 L55.5 174.5 L56.6 173.1 L57.6 171.8 L58.5 170.5 L59.1 169.2 L59.6 167.9 L59.9 166.7 L60.0 165.6 M64.5 170.4 L58.1 170.8 L52.3 171.2 L46.9 171.7 L42.1 172.2 L37.8 172.8 L34.2 173.3 L31.2 173.8 L28.9 174.2 L27.3 174.6 L26.3 174.8 L25.9 175.0 L26.2 175.0 L27.2 174.8 L28.7 174.5 L30.8 174.0 L33.4 173.4 L36.5 172.6 M20.9 199.5 L18.9 198.7 L17.4 197.8 L16.6 196.7 L16.3 195.4 L16.5 193.9 L17.2 192.3 L18.4 190.4 L20.1 188.4 L22.1 186.3 L24.5 184.0 L27.2 181.6 L30.1 179.1 L33.3 176.5 L36.6 174.0 M23.5 225.7 L22.7 223.4 L22.3 220.8 L22.2 218.0 L22.5 215.1 L23.1 211.9 L24.0 208.6 L25.0 205.1 L26.3 201.6 L27.7 198.0 L29.2 194.4 L30.8 190.7 L32.4 187.2 L34.0 183.7 L35.5 180.3 L37.0 177.1 L38.4 174.1 M53.0 246.5 L52.1 243.2 L51.4 239.5 L51.0 235.7 L50.6 231.7 L50.4 227.5 L50.3 223.2 L50.2 218.9 L50.1 214.4 L50.0 210.0 L49.8 205.6 L49.6 201.3 L49.2 197.1 L48.7 193.1 L48.1 189.3 L47.3 185.7 L46.3 182.5 L45.1 179.5 L43.8 177.0 L42.4 174.8 L40.8 173.0 M103.1 259.7 L102.0 256.1 L101.0 252.3 L100.0 248.1 L99.1 243.8 L98.2 239.2 L97.2 234.5 L96.1 229.7 L94.9 224.8 L93.6 219.8 L92.1 214.9 L90.4 210.1 L88.5 205.3 L86.4 200.7 L84.0 196.3 L81.5 192.1 L78.7 188.2 L75.7 184.7 L72.5 181.4 L69.1 178.6 L65.5 176.2 L61.8 174.2 L58.0 172.7 L54.1 171.6 L50.2 171.0 L46.3 170.9 L42.4 171.2 M154.7 256.0 L154.1 252.2 L153.4 248.1 L152.5 243.7 L151.5 239.1 L150.4 234.3 L149.0 229.3 L147.4 224.2 L145.5 219.1 L143.3 213.9 L140.8 208.8 L138.0 203.7 L134.9 198.8 L131.4 194.0 L127.6 189.5 L123.5 185.2 L119.2 181.2 L114.5 177.5 L109.6 174.2 L104.4 171.2 L99.1 168.7 L93.7 166.6 L88.1 165.0 L82.5 163.8 L76.9 163.0 L71.4 162.7 L65.9 162.9 L60.6 163.5 L55.6 164.5 L50.8 165.9 L46.4 167.7 L42.3 169.9 M191.6 238.6 L191.3 234.2 L190.7 229.5 L189.7 224.7 L188.3 219.8 L186.5 214.7 L184.4 209.6 L181.8 204.4 L178.7 199.4 L175.2 194.4 L171.3 189.5 L167.0 184.8 L162.2 180.4 L157.1 176.1 L151.6 172.2 L145.8 168.6 L139.6 165.3 L133.2 162.4 L126.7 159.9 L119.9 157.8 L113.1 156.1 L106.2 154.8 L99.4 154.0 L92.6 153.5 L86.0 153.4 L79.6 153.8 L73.4 154.4 L67.6 155.5 L62.2 156.8 L57.2 158.4 L52.7 160.3 L48.8 162.4 L45.4 164.7 L42.7 167.2 L40.6 169.7 M201.1 206.5 L198.5 201.7 L195.3 196.9 L191.5 192.3 L187.3 187.8 L182.5 183.4 L177.2 179.3 L171.5 175.4 L165.3 171.7 L158.8 168.4 L152.0 165.4 L144.8 162.7 L137.5 160.4 L130.0 158.4 L122.3 156.8 L114.7 155.5 L107.1 154.6 L99.6 154.0 L92.2 153.7 L85.1 153.7 L78.3 154.0 L71.8 154.6 L65.7 155.4 L60.1 156.4 L55.1 157.6 L50.5 158.9 L46.6 160.4 L43.4 161.9 L40.8 163.4 L38.8 165.0 L37.6 166.5 L37.1 168.1 L37.3 169.5 L38.2 170.9" fill="none" stroke="#70707a" stroke-width=".55" opacity=".85"/>
<ellipse cx="111.3" cy="214.1" rx="96.200" ry="60.800" transform="rotate(12.500 111.3 214.1)" fill="none" stroke="#8c8c98" stroke-width=".6" opacity=".8"/>
<g font-family="'DejaVu Sans',sans-serif" font-weight="bold" font-size="5.500" fill="#55552c"><text x="104.500" y="170">Dx</text><text x="28" y="247.500">Dy</text><text x="191" y="263">Dz</text><text x="105" y="251" fill="#8a8a78">Dx</text><text x="34" y="171" fill="#f4f4f8">Dz</text><text x="170" y="182" fill="#f4f4f8">Dy</text></g>
<svg x="30" y="335" width="180" height="195" viewBox="0 0 927 1004">
<filter id="fb2" x="-20%" y="-20%" width="140%" height="140%"><feGaussianBlur stdDeviation="18"/></filter>
<g filter="url(#fb2)" fill="#cfd4d9" opacity=".75"><ellipse cx="560" cy="440" rx="170" ry="150"/><ellipse cx="640" cy="560" rx="90" ry="60"/><ellipse cx="190" cy="770" rx="50" ry="110"/><ellipse cx="420" cy="300" rx="120" ry="50"/></g>
<g fill="none" stroke="#8e949a" stroke-width="16" stroke-linecap="round" stroke-linejoin="round"><path d="M200 180 L130 215 L75 240 L90 270 L140 285 L200 290 L230 300 M300 780 L270 765 L250 740 M310 860 L290 910 L250 945 L210 940 M640 120 L665 140 L670 180 L640 220 M790 440 L840 490 L845 510 L810 530 M400 760 L440 750 L480 700 M240 280 L300 250 L400 230 M360 580 L380 620 L350 650 L330 760 M270 209 L305 219 L335 194 L340 159 L375 154 L405 144 L435 134 L450 109 L475 89 L505 94 L535 84 L565 69 L595 84 L625 94 L645 119 M405 209 L450 199 L475 209 L505 184 L535 189 L560 164 L590 154 L615 174 L635 204 L655 234 L675 244 M655 234 L695 239 L725 219 L765 229 L755 264 L750 304 L725 314 L695 319 L655 324 L625 334 L595 344 M705 324 L725 354 L740 384 L730 414 L720 444 L705 464 L685 484 L670 504 M785 434 L805 429 L815 449 L835 474 L845 504 L815 514 L785 524 L755 514 L725 534 M155 374 L180 344 L205 339 L225 364 L240 394 L220 419 L200 414 L180 394 L155 374 M240 394 L270 389 L295 374 L325 369 L350 354 M250 269 L275 254 L305 259 L335 269 L355 254 L395 234 L425 244 L455 264 L485 279 L515 284 L550 294 L585 324 L605 344 M355 434 L385 444 L415 424 L445 434 L465 414 L495 394 M375 494 L415 504 L445 534 L425 554 L405 584 M335 754 L345 714 L365 694 L375 654 L395 634 L405 604 L425 584 L445 594 L475 584 L505 569 L525 584 M360 734 L380 704 L390 674 L410 644 L425 614 L450 604 M435 714 L465 684 L485 674 L505 644 L535 634 L565 644 L595 644"/></g>
<g fill="none" stroke="#fbfcfd" stroke-width="10" stroke-linecap="round" stroke-linejoin="round"><path d="M200 180 L130 215 L75 240 L90 270 L140 285 L200 290 L230 300 M300 780 L270 765 L250 740 M310 860 L290 910 L250 945 L210 940 M640 120 L665 140 L670 180 L640 220 M790 440 L840 490 L845 510 L810 530 M400 760 L440 750 L480 700 M240 280 L300 250 L400 230 M360 580 L380 620 L350 650 L330 760 M270 209 L305 219 L335 194 L340 159 L375 154 L405 144 L435 134 L450 109 L475 89 L505 94 L535 84 L565 69 L595 84 L625 94 L645 119 M405 209 L450 199 L475 209 L505 184 L535 189 L560 164 L590 154 L615 174 L635 204 L655 234 L675 244 M655 234 L695 239 L725 219 L765 229 L755 264 L750 304 L725 314 L695 319 L655 324 L625 334 L595 344 M705 324 L725 354 L740 384 L730 414 L720 444 L705 464 L685 484 L670 504 M785 434 L805 429 L815 449 L835 474 L845 504 L815 514 L785 524 L755 514 L725 534 M155 374 L180 344 L205 339 L225 364 L240 394 L220 419 L200 414 L180 394 L155 374 M240 394 L270 389 L295 374 L325 369 L350 354 M250 269 L275 254 L305 259 L335 269 L355 254 L395 234 L425 244 L455 264 L485 279 L515 284 L550 294 L585 324 L605 344 M355 434 L385 444 L415 424 L445 434 L465 414 L495 394 M375 494 L415 504 L445 534 L425 554 L405 584 M335 754 L345 714 L365 694 L375 654 L395 634 L405 604 L425 584 L445 594 L475 584 L505 569 L525 584 M360 734 L380 704 L390 674 L410 644 L425 614 L450 604 M435 714 L465 684 L485 674 L505 644 L535 634 L565 644 L595 644"/></g>
<path d="M320 258 L420 250 L520 288 L585 330" fill="none" stroke="#878d93" stroke-width="30" stroke-linecap="butt" stroke-linejoin="round"/>
<path d="M305 398 L400 378 L465 368" fill="none" stroke="#878d93" stroke-width="26" stroke-linecap="butt" stroke-linejoin="round"/>
<path d="M405 322 L480 320 L560 350 L610 372" fill="none" stroke="#878d93" stroke-width="28" stroke-linecap="butt" stroke-linejoin="round"/>
<path d="M640 300 L690 258 L712 320 L730 385" fill="none" stroke="#878d93" stroke-width="32" stroke-linecap="butt" stroke-linejoin="round"/>
<path d="M600 310 L640 350 L640 420" fill="none" stroke="#878d93" stroke-width="28" stroke-linecap="butt" stroke-linejoin="round"/>
<path d="M320 258 L420 250 L520 288 L585 330" fill="none" stroke="#eceef0" stroke-width="23" stroke-linecap="butt" stroke-linejoin="round"/>
<path d="M324 262 L424 254 L524 292 L590 334" fill="none" stroke="#c3c8cd" stroke-width="9" stroke-linecap="butt" stroke-linejoin="round"/>
<path d="M305 398 L400 378 L465 368" fill="none" stroke="#eceef0" stroke-width="19" stroke-linecap="butt" stroke-linejoin="round"/>
<path d="M309 402 L404 382 L469 372" fill="none" stroke="#c3c8cd" stroke-width="8" stroke-linecap="butt" stroke-linejoin="round"/>
<path d="M405 322 L480 320 L560 350 L610 372" fill="none" stroke="#eceef0" stroke-width="21" stroke-linecap="butt" stroke-linejoin="round"/>
<path d="M409 326 L484 324 L564 354 L614 376" fill="none" stroke="#c3c8cd" stroke-width="8" stroke-linecap="butt" stroke-linejoin="round"/>
<path d="M640 300 L690 258 L712 320 L730 385" fill="none" stroke="#eceef0" stroke-width="25" stroke-linecap="butt" stroke-linejoin="round"/>
<path d="M645 305 L695 263 L717 325 L735 390" fill="none" stroke="#c3c8cd" stroke-width="10" stroke-linecap="butt" stroke-linejoin="round"/>
<path d="M600 310 L640 350 L640 420" fill="none" stroke="#eceef0" stroke-width="21" stroke-linecap="butt" stroke-linejoin="round"/>
<path d="M604 314 L644 354 L644 424" fill="none" stroke="#c3c8cd" stroke-width="8" stroke-linecap="butt" stroke-linejoin="round"/>
<g transform="translate(440 545) rotate(33)"><ellipse rx="44" ry="18" fill="#f6f7f8" stroke="#858b91" stroke-width="4"/><path d="M-35 5 A37 13 0 0 0 35 5" fill="none" stroke="#b9bec3" stroke-width="10"/></g>
<g transform="translate(466 525) rotate(33)"><ellipse rx="44" ry="18" fill="#f6f7f8" stroke="#858b91" stroke-width="4"/><path d="M-35 5 A37 13 0 0 0 35 5" fill="none" stroke="#b9bec3" stroke-width="10"/></g>
<g transform="translate(492 505) rotate(33)"><ellipse rx="44" ry="18" fill="#f6f7f8" stroke="#858b91" stroke-width="4"/><path d="M-35 5 A37 13 0 0 0 35 5" fill="none" stroke="#b9bec3" stroke-width="10"/></g>
<g transform="translate(519 485) rotate(33)"><ellipse rx="44" ry="18" fill="#f6f7f8" stroke="#858b91" stroke-width="4"/><path d="M-35 5 A37 13 0 0 0 35 5" fill="none" stroke="#b9bec3" stroke-width="10"/></g>
<g transform="translate(545 465) rotate(33)"><ellipse rx="44" ry="18" fill="#f6f7f8" stroke="#858b91" stroke-width="4"/><path d="M-35 5 A37 13 0 0 0 35 5" fill="none" stroke="#b9bec3" stroke-width="10"/></g>
<g transform="translate(575 520) rotate(31)"><ellipse rx="40" ry="17" fill="#f6f7f8" stroke="#858b91" stroke-width="4"/><path d="M-32 5 A34 12 0 0 0 32 5" fill="none" stroke="#b9bec3" stroke-width="9"/></g>
<g transform="translate(596 503) rotate(31)"><ellipse rx="40" ry="17" fill="#f6f7f8" stroke="#858b91" stroke-width="4"/><path d="M-32 5 A34 12 0 0 0 32 5" fill="none" stroke="#b9bec3" stroke-width="9"/></g>
<g transform="translate(618 486) rotate(31)"><ellipse rx="40" ry="17" fill="#f6f7f8" stroke="#858b91" stroke-width="4"/><path d="M-32 5 A34 12 0 0 0 32 5" fill="none" stroke="#b9bec3" stroke-width="9"/></g>
<g transform="translate(639 469) rotate(31)"><ellipse rx="40" ry="17" fill="#f6f7f8" stroke="#858b91" stroke-width="4"/><path d="M-32 5 A34 12 0 0 0 32 5" fill="none" stroke="#b9bec3" stroke-width="9"/></g>
<g transform="translate(660 452) rotate(31)"><ellipse rx="40" ry="17" fill="#f6f7f8" stroke="#858b91" stroke-width="4"/><path d="M-32 5 A34 12 0 0 0 32 5" fill="none" stroke="#b9bec3" stroke-width="9"/></g>
<g transform="translate(600 628) rotate(36)"><ellipse rx="38" ry="16" fill="#f6f7f8" stroke="#858b91" stroke-width="4"/><path d="M-30 5 A32 11 0 0 0 30 5" fill="none" stroke="#b9bec3" stroke-width="8"/></g>
<g transform="translate(622 613) rotate(36)"><ellipse rx="38" ry="16" fill="#f6f7f8" stroke="#858b91" stroke-width="4"/><path d="M-30 5 A32 11 0 0 0 30 5" fill="none" stroke="#b9bec3" stroke-width="8"/></g>
<g transform="translate(645 598) rotate(36)"><ellipse rx="38" ry="16" fill="#f6f7f8" stroke="#858b91" stroke-width="4"/><path d="M-30 5 A32 11 0 0 0 30 5" fill="none" stroke="#b9bec3" stroke-width="8"/></g>
<g transform="translate(668 583) rotate(36)"><ellipse rx="38" ry="16" fill="#f6f7f8" stroke="#858b91" stroke-width="4"/><path d="M-30 5 A32 11 0 0 0 30 5" fill="none" stroke="#b9bec3" stroke-width="8"/></g>
<g transform="translate(690 568) rotate(36)"><ellipse rx="38" ry="16" fill="#f6f7f8" stroke="#858b91" stroke-width="4"/><path d="M-30 5 A32 11 0 0 0 30 5" fill="none" stroke="#b9bec3" stroke-width="8"/></g>
<g transform="translate(690 585) rotate(22)"><ellipse rx="34" ry="14" fill="#f6f7f8" stroke="#858b91" stroke-width="4"/><path d="M-27 4 A29 10 0 0 0 27 4" fill="none" stroke="#b9bec3" stroke-width="7"/></g>
<g transform="translate(709 563) rotate(22)"><ellipse rx="34" ry="14" fill="#f6f7f8" stroke="#858b91" stroke-width="4"/><path d="M-27 4 A29 10 0 0 0 27 4" fill="none" stroke="#b9bec3" stroke-width="7"/></g>
<g transform="translate(729 542) rotate(22)"><ellipse rx="34" ry="14" fill="#f6f7f8" stroke="#858b91" stroke-width="4"/><path d="M-27 4 A29 10 0 0 0 27 4" fill="none" stroke="#b9bec3" stroke-width="7"/></g>
<g transform="translate(748 520) rotate(22)"><ellipse rx="34" ry="14" fill="#f6f7f8" stroke="#858b91" stroke-width="4"/><path d="M-27 4 A29 10 0 0 0 27 4" fill="none" stroke="#b9bec3" stroke-width="7"/></g>
<g transform="translate(455 652) rotate(43)"><ellipse rx="34" ry="14" fill="#f6f7f8" stroke="#858b91" stroke-width="4"/><path d="M-27 4 A29 10 0 0 0 27 4" fill="none" stroke="#b9bec3" stroke-width="7"/></g>
<g transform="translate(475 642) rotate(43)"><ellipse rx="34" ry="14" fill="#f6f7f8" stroke="#858b91" stroke-width="4"/><path d="M-27 4 A29 10 0 0 0 27 4" fill="none" stroke="#b9bec3" stroke-width="7"/></g>
<g transform="translate(495 632) rotate(43)"><ellipse rx="34" ry="14" fill="#f6f7f8" stroke="#858b91" stroke-width="4"/><path d="M-27 4 A29 10 0 0 0 27 4" fill="none" stroke="#b9bec3" stroke-width="7"/></g>
<g transform="translate(515 622) rotate(43)"><ellipse rx="34" ry="14" fill="#f6f7f8" stroke="#858b91" stroke-width="4"/><path d="M-27 4 A29 10 0 0 0 27 4" fill="none" stroke="#b9bec3" stroke-width="7"/></g>
<g transform="translate(535 612) rotate(43)"><ellipse rx="34" ry="14" fill="#f6f7f8" stroke="#858b91" stroke-width="4"/><path d="M-27 4 A29 10 0 0 0 27 4" fill="none" stroke="#b9bec3" stroke-width="7"/></g>
<g transform="translate(168 660) rotate(153)"><ellipse rx="52" ry="22" fill="#f6f7f8" stroke="#858b91" stroke-width="4"/><path d="M-42 6 A44 16 0 0 0 42 6" fill="none" stroke="#b9bec3" stroke-width="11"/></g>
<g transform="translate(172 697) rotate(153)"><ellipse rx="52" ry="22" fill="#f6f7f8" stroke="#858b91" stroke-width="4"/><path d="M-42 6 A44 16 0 0 0 42 6" fill="none" stroke="#b9bec3" stroke-width="11"/></g>
<g transform="translate(177 733) rotate(153)"><ellipse rx="52" ry="22" fill="#f6f7f8" stroke="#858b91" stroke-width="4"/><path d="M-42 6 A44 16 0 0 0 42 6" fill="none" stroke="#b9bec3" stroke-width="11"/></g>
<g transform="translate(182 770) rotate(153)"><ellipse rx="52" ry="22" fill="#f6f7f8" stroke="#858b91" stroke-width="4"/><path d="M-42 6 A44 16 0 0 0 42 6" fill="none" stroke="#b9bec3" stroke-width="11"/></g>
<g transform="translate(186 807) rotate(153)"><ellipse rx="52" ry="22" fill="#f6f7f8" stroke="#858b91" stroke-width="4"/><path d="M-42 6 A44 16 0 0 0 42 6" fill="none" stroke="#b9bec3" stroke-width="11"/></g>
<g transform="translate(190 843) rotate(153)"><ellipse rx="52" ry="22" fill="#f6f7f8" stroke="#858b91" stroke-width="4"/><path d="M-42 6 A44 16 0 0 0 42 6" fill="none" stroke="#b9bec3" stroke-width="11"/></g>
<g transform="translate(195 880) rotate(153)"><ellipse rx="52" ry="22" fill="#f6f7f8" stroke="#858b91" stroke-width="4"/><path d="M-42 6 A44 16 0 0 0 42 6" fill="none" stroke="#b9bec3" stroke-width="11"/></g>
<g transform="translate(440 62) rotate(105)"><ellipse rx="28" ry="12" fill="#f6f7f8" stroke="#858b91" stroke-width="4"/><path d="M-22 3 A24 8 0 0 0 22 3" fill="none" stroke="#b9bec3" stroke-width="6"/></g>
<g transform="translate(456 73) rotate(105)"><ellipse rx="28" ry="12" fill="#f6f7f8" stroke="#858b91" stroke-width="4"/><path d="M-22 3 A24 8 0 0 0 22 3" fill="none" stroke="#b9bec3" stroke-width="6"/></g>
<g transform="translate(471 84) rotate(105)"><ellipse rx="28" ry="12" fill="#f6f7f8" stroke="#858b91" stroke-width="4"/><path d="M-22 3 A24 8 0 0 0 22 3" fill="none" stroke="#b9bec3" stroke-width="6"/></g>
<g transform="translate(487 94) rotate(105)"><ellipse rx="28" ry="12" fill="#f6f7f8" stroke="#858b91" stroke-width="4"/><path d="M-22 3 A24 8 0 0 0 22 3" fill="none" stroke="#b9bec3" stroke-width="6"/></g>
<g transform="translate(502 105) rotate(105)"><ellipse rx="28" ry="12" fill="#f6f7f8" stroke="#858b91" stroke-width="4"/><path d="M-22 3 A24 8 0 0 0 22 3" fill="none" stroke="#b9bec3" stroke-width="6"/></g>
<g transform="translate(518 116) rotate(105)"><ellipse rx="28" ry="12" fill="#f6f7f8" stroke="#858b91" stroke-width="4"/><path d="M-22 3 A24 8 0 0 0 22 3" fill="none" stroke="#b9bec3" stroke-width="6"/></g>
<g fill="none" stroke="#18aed0" stroke-width="13" stroke-linecap="round" stroke-linejoin="round"><path d="M265 215 L300 225 L330 200 L335 165 L370 160 L400 150 L430 140 L445 115 L470 95 L500 100 L530 90 L560 75 L590 90 L620 100 L640 125 M400 215 L425 220 L445 205 L470 215 L500 190 L530 195 L555 170 L585 160 L610 180 L630 210 L650 240 L670 250 M650 240 L690 245 L720 225 L760 235 L750 270 L745 310 L720 320 L690 325 L650 330 L620 340 L590 350 M700 330 L720 360 L735 390 L725 420 L715 450 L700 470 L680 490 L665 510 M780 440 L800 435 L810 455 L830 480 L840 510 L810 520 L780 530 L750 520 L720 540 M150 380 L175 350 L200 345 L220 370 L235 400 L215 425 L195 420 L175 400 L150 380 M235 400 L265 395 L290 380 L320 375 L345 360 M245 275 L270 260 L300 265 L330 275 L350 260 L390 240 L420 250 L450 270 L480 285 L510 290 L545 300 L556 323 L580 330 L600 350 M230 300 L250 320 L270 330 L280 310 L262 300 M350 440 L380 450 L410 430 L440 440 L460 420 L490 400 M370 500 L410 510 L440 540 L420 560 L400 590 M330 760 L340 720 L360 700 L370 660 L390 640 L400 610 L420 590 L440 600 L470 590 L500 575 L520 590 M355 740 L375 710 L385 680 L405 650 L420 620 L445 610 M430 720 L460 690 L480 680 L500 650 L530 640 L560 650 L590 650 M480 480 L500 510 L520 490 L550 520 L570 500 M600 570 L620 590 L650 570 L680 590 L700 560 M520 600 L500 620 L480 640 M600 400 L630 420 L660 400 L640 380 M560 340 L580 370 L570 400 L590 420 M620 300 L660 290 L680 320 L700 300 M150 665 L162 698 L190 720 L200 740 M135 830 L153 849 L180 850 L200 880 L190 900 M190 690 L215 700 M150 770 L177 775 L200 760 L240 770"/></g>
<g fill="none" stroke="#30def2" stroke-width="8" stroke-linecap="round" stroke-linejoin="round"><path d="M265 215 L300 225 L330 200 L335 165 L370 160 L400 150 L430 140 L445 115 L470 95 L500 100 L530 90 L560 75 L590 90 L620 100 L640 125 M400 215 L425 220 L445 205 L470 215 L500 190 L530 195 L555 170 L585 160 L610 180 L630 210 L650 240 L670 250 M650 240 L690 245 L720 225 L760 235 L750 270 L745 310 L720 320 L690 325 L650 330 L620 340 L590 350 M700 330 L720 360 L735 390 L725 420 L715 450 L700 470 L680 490 L665 510 M780 440 L800 435 L810 455 L830 480 L840 510 L810 520 L780 530 L750 520 L720 540 M150 380 L175 350 L200 345 L220 370 L235 400 L215 425 L195 420 L175 400 L150 380 M235 400 L265 395 L290 380 L320 375 L345 360 M245 275 L270 260 L300 265 L330 275 L350 260 L390 240 L420 250 L450 270 L480 285 L510 290 L545 300 L556 323 L580 330 L600 350 M230 300 L250 320 L270 330 L280 310 L262 300 M350 440 L380 450 L410 430 L440 440 L460 420 L490 400 M370 500 L410 510 L440 540 L420 560 L400 590 M330 760 L340 720 L360 700 L370 660 L390 640 L400 610 L420 590 L440 600 L470 590 L500 575 L520 590 M355 740 L375 710 L385 680 L405 650 L420 620 L445 610 M430 720 L460 690 L480 680 L500 650 L530 640 L560 650 L590 650 M480 480 L500 510 L520 490 L550 520 L570 500 M600 570 L620 590 L650 570 L680 590 L700 560 M520 600 L500 620 L480 640 M600 400 L630 420 L660 400 L640 380 M560 340 L580 370 L570 400 L590 420 M620 300 L660 290 L680 320 L700 300 M150 665 L162 698 L190 720 L200 740 M135 830 L153 849 L180 850 L200 880 L190 900 M190 690 L215 700 M150 770 L177 775 L200 760 L240 770"/></g>
<path d="M118 230 L165 212" fill="none" stroke="#1a74ea" stroke-width="32" stroke-linecap="round" stroke-linejoin="round"/>
<path d="M88 266 L95 295" fill="none" stroke="#1a74ea" stroke-width="30" stroke-linecap="round" stroke-linejoin="round"/>
<path d="M118 296 L160 296" fill="none" stroke="#1a74ea" stroke-width="30" stroke-linecap="round" stroke-linejoin="round"/>
<path d="M285 272 L315 265 L340 280" fill="none" stroke="#1c8cee" stroke-width="24" stroke-linecap="round" stroke-linejoin="round"/>
<path d="M265 440 L295 465 L325 455" fill="none" stroke="#0f64d8" stroke-width="32" stroke-linecap="round" stroke-linejoin="round"/>
<path d="M600 95 L635 125" fill="none" stroke="#1ea0ee" stroke-width="22" stroke-linecap="round" stroke-linejoin="round"/>
<path d="M160 668 L185 705" fill="none" stroke="#1ea0ee" stroke-width="18" stroke-linecap="round" stroke-linejoin="round"/>
<path d="M165 905 L175 935 L205 942" fill="none" stroke="#1a74ea" stroke-width="30" stroke-linecap="round" stroke-linejoin="round"/>
<path d="M310 830 L315 855" fill="none" stroke="#1ea0ee" stroke-width="20" stroke-linecap="round" stroke-linejoin="round"/>
<path d="M590 655 L640 640" fill="none" stroke="#0f64d8" stroke-width="26" stroke-linecap="round" stroke-linejoin="round"/>
<path d="M455 458 L475 468" fill="none" stroke="#1c8cee" stroke-width="18" stroke-linecap="round" stroke-linejoin="round"/>
<path d="M490 385 L498 402" fill="none" stroke="#1c8cee" stroke-width="22" stroke-linecap="round" stroke-linejoin="round"/>
<path d="M272 735 L285 752" fill="none" stroke="#1ec0ee" stroke-width="16" stroke-linecap="round" stroke-linejoin="round"/>
<path d="M740 235 L765 232" fill="none" stroke="#1ec0ee" stroke-width="14" stroke-linecap="round" stroke-linejoin="round"/>
<path d="M785 438 L800 436" fill="none" stroke="#1ec0ee" stroke-width="14" stroke-linecap="round" stroke-linejoin="round"/>
<g fill="url(#lb1)"><circle cx="245" cy="212" r="33"/><circle cx="350" cy="805" r="35"/><circle cx="392" cy="780" r="35"/><circle cx="592" cy="700" r="27"/><circle cx="562" cy="715" r="30"/><circle cx="542" cy="745" r="30"/><circle cx="522" cy="780" r="30"/><circle cx="500" cy="792" r="18"/></g>
<path d="M505 770 L520 790 L545 830 L580 880" fill="none" stroke="#8e949a" stroke-width="9" stroke-linecap="round"/><path d="M505 770 L520 790 L545 830 L580 880" fill="none" stroke="#eef0f2" stroke-width="5" stroke-linecap="round"/>
</svg>
</svg>
<div class="t" style="left:250.02px;top:135px;font-size:21px;line-height:24px;letter-spacing:0.155px;">Setup for model-free analysis</div>
<div class="t" style="left:251.64px;top:170px;font-size:13px;line-height:15px;letter-spacing:-0.218px;">The data pipe bundle:</div>
<div class="field " style="top:165px"></div><div class="t" style="left:499.42px;top:170px;font-size:13px;line-height:15px;letter-spacing:-0.213px;">mf (Mon Jul 25 14:53:18 2011)</div>
<div class="t" style="left:250.32px;top:195px;font-size:13px;line-height:15px;letter-spacing:-0.259px;">Results directory</div>
<div class="field w" style="top:190px"></div><div class="t" style="left:500.00px;top:195px;font-size:13px;line-height:15px;letter-spacing:-0.197px;">/data/relax/branches/gui_testing/mf</div>
<div class="t" style="left:250.74px;top:220px;font-size:13px;line-height:15px;letter-spacing:-0.015px;">Spin systems</div>
<div class="field " style="top:215px"></div><div class="t" style="left:499.78px;top:220px;font-size:13px;line-height:15px;letter-spacing:-0.116px;">9 spins loaded and selected</div>
<div class="t" style="left:250.32px;top:570px;font-size:13px;line-height:15px;letter-spacing:-0.008px;">Local τm models:</div>
<div class="field " style="top:565px"></div><div class="t" style="left:499.68px;top:570px;font-size:13px;line-height:15px;letter-spacing:-0.200px;">['tm0', 'tm1', 'tm2', 'tm3', 'tm4', 'tm5', 'tm6', 'tm7', 'tm8', 'tm9']</div>
<div class="t" style="left:250.32px;top:595px;font-size:13px;line-height:15px;letter-spacing:-0.012px;">Model-free models:</div>
<div class="field " style="top:590px"></div><div class="t" style="left:499.68px;top:595px;font-size:13px;line-height:15px;letter-spacing:-0.215px;">['m0', 'm1', 'm2', 'm3', 'm4', 'm5', 'm6', 'm7', 'm8', 'm9']</div>
<div class="t" style="left:250.87px;top:620px;font-size:13px;line-height:15px;letter-spacing:-0.085px;">Grid search increments:</div>
<div class="field w s" style="top:615px"></div><div class="t" style="left:500.01px;top:620px;font-size:13px;line-height:15px;letter-spacing:0.000px;">3</div>
<div class="spin" style="top:616px"><i class="up"></i><i class="dn"></i></div>
<div class="t" style="left:250.32px;top:645px;font-size:13px;line-height:15px;letter-spacing:-0.095px;">Monte Carlo simulation number:</div>
<div class="field w s" style="top:640px"></div><div class="t" style="left:500.05px;top:645px;font-size:13px;line-height:15px;letter-spacing:0.000px;">2</div>
<div class="spin" style="top:641px"><i class="up"></i><i class="dn"></i></div>
<div class="t" style="left:250.32px;top:670px;font-size:13px;line-height:15px;letter-spacing:-0.128px;">Maximum interations</div>
<div class="field w s" style="top:665px"></div><div class="t" style="left:500.05px;top:670px;font-size:13px;line-height:15px;letter-spacing:-0.354px;">25</div>
<div class="spin" style="top:666px"><i class="up"></i><i class="dn dis"></i></div>
<div class="t" style="left:250.32px;top:695px;font-size:13px;line-height:15px;letter-spacing:0.047px;">Protocol mode:</div>
<div class="field " style="top:690px"></div><div class="t" style="left:499.52px;top:695px;font-size:13px;line-height:15px;letter-spacing:-0.203px;">Fully automated</div>
<div class="abs" style="left:251px;top:260px;width:1137px;height:247px;border:1px solid #c3cfd7;border-radius:3px;box-sizing:border-box;box-shadow:inset 1px 1px 0 #fafbfd"></div>
<div class="abs" style="left:254px;top:250px;width:172px;height:18px;background:#eff2f7"></div>
<div class="t" style="left:255.22px;top:251px;font-size:15px;line-height:18px;letter-spacing:0.182px;font-weight:bold;">Relaxation data list</div>
<div class="btn" style="left:261px;top:274px;width:169px;height:39px"></div>
<div class="btn" style="left:611px;top:274px;width:169px;height:39px"></div>
<div class="btn" style="left:786px;top:274px;width:169px;height:39px"></div>
<div class="btn" style="background:linear-gradient(#fff 0,#f2f4f5 35%,#e4e8ea 55%,#d3dadd 100%);left:436px;top:274px;width:169px;height:39px"></div>
<div class="t" style="left:347.90px;top:286px;font-size:13px;line-height:15px;letter-spacing:0.143px;">Add</div>
<div class="t" style="left:523.00px;top:286px;font-size:13px;line-height:15px;letter-spacing:0.093px;">Add</div>
<div class="t" style="left:688.72px;top:286px;font-size:13px;line-height:15px;letter-spacing:0.191px;">Delete</div>
<div class="t" style="left:837.80px;top:286px;font-size:13px;line-height:15px;letter-spacing:-0.116px;">View metadata</div>
<div class="abs" style="left:261px;top:319px;width:1118px;height:180px;border:1px solid #c3cfd7;background:#fff;box-sizing:border-box"></div>
<div class="abs" style="left:262px;top:320px;width:1116px;height:25px;background:linear-gradient(#f6f8fa 0,#eceff2 50%,#dde4e8 60%,#cfd9de 100%);border-bottom:1px solid #a3b5c2"></div>
<div class="t" style="left:268.12px;top:326px;font-size:13px;line-height:15px;letter-spacing:-0.289px;">Relaxation data ID</div>
<div class="t" style="left:640.02px;top:326px;font-size:13px;line-height:15px;letter-spacing:-0.018px;">Data type</div>
<div class="t" style="left:1012.12px;top:326px;font-size:13px;line-height:15px;letter-spacing:-0.144px;">Frequency (Hz)</div>
<div class="t" style="left:264.52px;top:349px;font-size:13px;line-height:15px;letter-spacing:0.040px;">noe_500</div>
<div class="t" style="left:636.22px;top:349px;font-size:13px;line-height:15px;letter-spacing:0.368px;">NOE</div>
<div class="t" style="left:1008.70px;top:349px;font-size:13px;line-height:15px;letter-spacing:-0.228px;">500000000.0</div>
<div class="t" style="left:264.52px;top:370px;font-size:13px;line-height:15px;letter-spacing:-0.077px;">r1_500</div>
<div class="t" style="left:636.22px;top:370px;font-size:13px;line-height:15px;letter-spacing:-1.128px;">R1</div>
<div class="t" style="left:1008.70px;top:370px;font-size:13px;line-height:15px;letter-spacing:-0.228px;">500000000.0</div>
<div class="t" style="left:264.52px;top:391px;font-size:13px;line-height:15px;letter-spacing:-0.077px;">r2_500</div>
<div class="t" style="left:636.22px;top:391px;font-size:13px;line-height:15px;letter-spacing:-1.027px;">R2</div>
<div class="t" style="left:1008.70px;top:391px;font-size:13px;line-height:15px;letter-spacing:-0.228px;">500000000.0</div>
<div class="t" style="left:264.52px;top:412px;font-size:13px;line-height:15px;letter-spacing:0.040px;">noe_900</div>
<div class="t" style="left:636.22px;top:412px;font-size:13px;line-height:15px;letter-spacing:0.368px;">NOE</div>
<div class="t" style="left:1008.88px;top:412px;font-size:13px;line-height:15px;letter-spacing:-0.246px;">900000000.0</div>
<div class="t" style="left:264.52px;top:433px;font-size:13px;line-height:15px;letter-spacing:-0.077px;">r1_900</div>
<div class="t" style="left:636.22px;top:433px;font-size:13px;line-height:15px;letter-spacing:-1.128px;">R1</div>
<div class="t" style="left:1008.88px;top:433px;font-size:13px;line-height:15px;letter-spacing:-0.246px;">900000000.0</div>
<div class="t" style="left:264.52px;top:454px;font-size:13px;line-height:15px;letter-spacing:-0.077px;">r2_900</div>
<div class="t" style="left:636.22px;top:454px;font-size:13px;line-height:15px;letter-spacing:-1.027px;">R2</div>
<div class="t" style="left:1008.88px;top:454px;font-size:13px;line-height:15px;letter-spacing:-0.246px;">900000000.0</div>
<div class="btn" style="background:linear-gradient(#f4f6f8 0,#e8ecf0 32%,#dde4e9 50%,#c9d5db 100%);left:251px;top:519px;width:283px;height:35px"></div>
<div class="btn" style="background:linear-gradient(#f4f6f8 0,#e8ecf0 32%,#dde4e9 50%,#c9d5db 100%);left:535px;top:519px;width:283px;height:35px"></div>
<div class="btn" style="background:linear-gradient(#f4f6f8 0,#e8ecf0 32%,#dde4e9 50%,#c9d5db 100%);left:819px;top:519px;width:284px;height:35px"></div>
<div class="btn" style="background:linear-gradient(#f4f6f8 0,#e8ecf0 32%,#dde4e9 50%,#c9d5db 100%);left:1104px;top:519px;width:284px;height:35px"></div>
<div class="t" style="left:350.82px;top:529px;font-size:13px;line-height:15px;letter-spacing:-0.146px;">Dipolar relaxation</div>
<div class="t" style="left:644.97px;top:529px;font-size:13px;line-height:15px;letter-spacing:-0.108px;">CSA relaxation</div>
<div class="t" style="left:946.71px;top:529px;font-size:13px;line-height:15px;letter-spacing:-0.212px;">X isotope</div>
<div class="t" style="left:1230.42px;top:529px;font-size:13px;line-height:15px;letter-spacing:-0.035px;">H isotope</div>
<div class="btn" style="background:linear-gradient(#f5f7f9 0,#eaeef1 35%,#e1e7eb 52%,#d5dde2 100%);left:1289px;top:190px;width:99px;height:24px"></div>
<div class="btn" style="background:linear-gradient(#f5f7f9 0,#eaeef1 35%,#e1e7eb 52%,#d5dde2 100%);left:1289px;top:215px;width:99px;height:24px"></div>
<div class="btn" style="background:linear-gradient(#f5f7f9 0,#eaeef1 35%,#e1e7eb 52%,#d5dde2 100%);left:1289px;top:565px;width:99px;height:24px"></div>
<div class="btn" style="background:linear-gradient(#f5f7f9 0,#eaeef1 35%,#e1e7eb 52%,#d5dde2 100%);left:1289px;top:590px;width:99px;height:24px"></div>
<div class="btn" style="background:linear-gradient(#f5f7f9 0,#eaeef1 35%,#e1e7eb 52%,#d5dde2 100%);left:1289px;top:690px;width:99px;height:24px"></div>
<div class="t" style="left:1326.17px;top:195px;font-size:13px;line-height:15px;letter-spacing:-0.210px;">Change</div>
<div class="t" style="left:1315.74px;top:220px;font-size:13px;line-height:15px;letter-spacing:-0.149px;">Spin editor</div>
<div class="t" style="left:1327.22px;top:570px;font-size:13px;line-height:15px;letter-spacing:-0.228px;">Modify</div>
<div class="t" style="left:1327.22px;top:595px;font-size:13px;line-height:15px;letter-spacing:-0.228px;">Modify</div>
<div class="t" style="left:1326.17px;top:695px;font-size:13px;line-height:15px;letter-spacing:-0.210px;">Change</div>
<div class="btn" style="background:linear-gradient(#f4f6f8 0,#e8ecf0 32%,#dde4e9 50%,#c9d5db 100%);left:11px;top:930px;width:85px;height:35px"></div>
<div class="t" style="left:48.30px;top:940px;font-size:13px;line-height:15px;letter-spacing:-0.281px;">About</div>
<div class="btn" style="left:1213px;top:922px;width:175px;height:43px"><div class="abs" style="left:3px;top:3px;right:3px;bottom:2px;border:1px dotted #2a1818"></div></div>
<div class="t" style="left:1296.32px;top:936px;font-size:13px;line-height:15px;letter-spacing:-0.186px;">Execute relax</div>
<svg class="abs" style="left:0;top:0" width="1400" height="1004" viewBox="0 0 1400 1004">
<defs>
<linearGradient id="ipl" x1="0" y1="0" x2="0" y2="1"><stop offset="0" stop-color="#9fdcf2"/><stop offset=".45" stop-color="#4a98d4"/><stop offset="1" stop-color="#0a36a0"/></linearGradient>
<linearGradient id="idel" x1="0" y1="0" x2="0" y2="1"><stop offset="0" stop-color="#f46a6a"/><stop offset=".5" stop-color="#e02424"/><stop offset="1" stop-color="#c01010"/></linearGradient>
<linearGradient id="iinf" x1="0" y1="0" x2="0" y2="1"><stop offset="0" stop-color="#5aa8ec"/><stop offset=".55" stop-color="#1464c4"/><stop offset="1" stop-color="#0a50b8"/></linearGradient>
<linearGradient id="ifol" x1="0" y1="0" x2="0" y2="1"><stop offset="0" stop-color="#a8c8f4"/><stop offset="1" stop-color="#7eaaec"/></linearGradient>
<radialGradient id="iball" cx=".35" cy=".3" r=".8"><stop offset="0" stop-color="#2a2ad8"/><stop offset=".55" stop-color="#00008c"/><stop offset=".9" stop-color="#1a3ab8"/><stop offset="1" stop-color="#6aa8ff"/></radialGradient>
<linearGradient id="iflag" x1="0" y1="0" x2="1" y2="0"><stop offset="0" stop-color="#0a3c94"/><stop offset=".6" stop-color="#2a78d8"/><stop offset="1" stop-color="#8cc0f4"/></linearGradient>
<radialGradient id="igc" cx=".5" cy=".5" r=".5"><stop offset="0" stop-color="#e4ecf8"/><stop offset=".42" stop-color="#d0def4"/><stop offset=".52" stop-color="#2a5cb8"/><stop offset=".8" stop-color="#12388c"/><stop offset="1" stop-color="#2a58b0"/></radialGradient>
<linearGradient id="ired" x1="0" y1="0" x2="1" y2="0"><stop offset="0" stop-color="#ee0808"/><stop offset=".55" stop-color="#f47a00"/><stop offset="1" stop-color="#f4e400"/></linearGradient>
<linearGradient id="iora" x1="0" y1="0" x2="1" y2="0"><stop offset="0" stop-color="#f4e400"/><stop offset=".5" stop-color="#f48a00"/><stop offset="1" stop-color="#ee1008"/></linearGradient>
<linearGradient id="icy" x1="0" y1="0" x2="0" y2="1"><stop offset="0" stop-color="#0818e8"/><stop offset=".5" stop-color="#0878e8"/><stop offset="1" stop-color="#08e0e8"/></linearGradient>
<radialGradient id="idb" cx=".5" cy=".65" r=".6"><stop offset="0" stop-color="#00007c"/><stop offset="1" stop-color="#0808f0"/></radialGradient>
<linearGradient id="ibw" x1="0" y1="0" x2="1" y2="1"><stop offset="0" stop-color="#0a5a78"/><stop offset=".5" stop-color="#1ab4cc"/><stop offset="1" stop-color="#0a4a68"/></linearGradient>
<linearGradient id="ibl" x1="1" y1="0" x2="0" y2="1"><stop offset="0" stop-color="#0a3450"/><stop offset=".5" stop-color="#127a9c"/><stop offset="1" stop-color="#2cc8d8"/></linearGradient><linearGradient id="ibr" x1="0" y1="0" x2="1" y2="1"><stop offset="0" stop-color="#0a3450"/><stop offset=".5" stop-color="#127a9c"/><stop offset="1" stop-color="#2cd0dc"/></linearGradient>
<filter id="fbl" x="-10%" y="-10%" width="120%" height="120%"><feGaussianBlur stdDeviation=".7"/></filter>
</defs>
<path d="M330.900 283.300 a2.500 2.500 0 0 1 2.500 2.500 v5.600 h5.900 a2.500 2.500 0 0 1 0 5 h-5.900 v5.700 a2.500 2.500 0 0 1 -5 0 v-5.700 h-5.700 a2.500 2.500 0 0 1 0 -5 h5.700 v-5.600 a2.500 2.500 0 0 1 2.500 -2.500z" fill="url(#ipl)" stroke="#0a4aa4" stroke-width="1.100"/>
<path d="M323.500 293.300 h15.500" stroke="#7ab8e4" stroke-width="1" opacity=".7"/><path d="M336 294.600 l4.500 -1 v1.500z" fill="#0a2a90"/>
<path d="M500.500 284.300 v7.900 M496.300 288.500 h8.500" stroke="#0e5aae" stroke-width="2.900" stroke-linecap="round"/><path d="M500.500 284.500 v7.500 M496.500 288.500 h8" stroke="#5aa8dc" stroke-width=".9" stroke-linecap="round"/>
<g fill="none" stroke="#2626c0" stroke-width=".85"><ellipse cx="506" cy="298" rx="8.700" ry="3.600" transform="rotate(38 506 298)"/><ellipse cx="506" cy="298" rx="8.700" ry="3.600" transform="rotate(-38 506 298)"/><circle cx="506" cy="298" r="2.400"/></g>
<path d="M495 297.900 h22.200" stroke="#0a0a0a" stroke-width="2" stroke-dasharray="1.500 .9"/>
<rect x="662.700" y="290.400" width="20.700" height="7" rx="2.100" fill="url(#idel)" stroke="#c21818" stroke-width=".9"/><rect x="665" y="291.600" width="16" height="1.300" rx=".6" fill="#f8a0a0" opacity=".8"/>
<path d="M811.500 283.500 H829.500 V296 L821 304.500 H811.500Z" fill="#fff" stroke="#8a9298" stroke-width="1"/>
<clipPath id="cdoc"><path d="M812 284 H829 V296 L821 304 H812Z"/></clipPath>
<g clip-path="url(#cdoc)"><circle cx="821.400" cy="294.600" r="8.400" fill="url(#iinf)"/></g>
<path d="M829.500 296 L821 304.500 C822 301.500 822 299.500 821.500 297.500 C824 298 827 297.500 829.500 296Z" fill="#f4f4f4" stroke="#9aa0a6" stroke-width=".6"/>
<circle cx="822.500" cy="290" r="1.350" fill="#fff"/><path d="M820.300 293.300 h3.300 v6.500 h1 v1 h-4.500 v-1 h1.100 v-5.300 h-.9z" fill="#fff"/>
<path d="M1304.500 209 V197 a.8 .8 0 0 1 .8 -.8 h4.700 l1.300 1.500 h7.500 a.8 .8 0 0 1 .8 .8 V209Z" fill="#9cc0f2" stroke="#4a8ae0" stroke-width=".9"/><path d="M1304.300 202.300 h16 v6 a.8 .8 0 0 1 -.8 .8 h-14.400 a.8 .8 0 0 1 -.8 -.8z" fill="url(#ifol)" stroke="#4a8ae0" stroke-width=".9"/><rect x="1305" y="209.300" width="14.600" height=".8" fill="#aab6c4" opacity=".7"/>
<path d="M1297.500 234.500 L1306.800 219.500" stroke="#1c5a8c" stroke-width="1.100"/><path d="M1304.600 220.600 L1307 219.200 L1307.300 222" stroke="#1c5a8c" stroke-width="1.100" fill="none"/>
<ellipse cx="1302" cy="227" rx="8.700" ry="2.600" transform="rotate(30 1302 227)" fill="none" stroke="#48d8e0" stroke-width=".8"/>
<circle cx="1302" cy="227" r="4.400" fill="url(#iball)"/><ellipse cx="1300.300" cy="224.600" rx="1.100" ry=".6" transform="rotate(-30 1300.300 224.600)" fill="#fff"/>
<path d="M1297.500 229.500 C1300 232 1305 232.500 1309 230.500" fill="none" stroke="#48d8e0" stroke-width=".8"/>
<path d="M1312.300 569 V584.3" stroke="#151515" stroke-width="1.200"/><path d="M1313 570.2 C1316 571.5 1320 571.5 1324 570.5 C1322 572.5 1322 573.5 1323.500 575 C1320 575.5 1316 577 1313 578.5Z" fill="url(#iflag)"/><path d="M1312 584.6 h11" stroke="#9aa6ae" stroke-width=".8" opacity=".7"/>
<path d="M1312.300 594 V609.3" stroke="#151515" stroke-width="1.200"/><path d="M1313 595.2 C1316 596.5 1320 596.5 1324 595.5 C1322 597.5 1322 598.5 1323.500 600 C1320 600.5 1316 602 1313 603.5Z" fill="url(#iflag)"/><path d="M1312 609.6 h11" stroke="#9aa6ae" stroke-width=".8" opacity=".7"/>
<g fill="#d6d9dc" stroke="#bcc0c4" stroke-width=".6"><circle cx="1312.1" cy="702.2" r="6"/><rect x="1310.3999999999999" y="694.4000000000001" width="3.400" height="4" rx=".7" transform="rotate(0 1312.1 702.2)"/><rect x="1310.3999999999999" y="694.4000000000001" width="3.400" height="4" rx=".7" transform="rotate(45 1312.1 702.2)"/><rect x="1310.3999999999999" y="694.4000000000001" width="3.400" height="4" rx=".7" transform="rotate(90 1312.1 702.2)"/><rect x="1310.3999999999999" y="694.4000000000001" width="3.400" height="4" rx=".7" transform="rotate(135 1312.1 702.2)"/><rect x="1310.3999999999999" y="694.4000000000001" width="3.400" height="4" rx=".7" transform="rotate(180 1312.1 702.2)"/><rect x="1310.3999999999999" y="694.4000000000001" width="3.400" height="4" rx=".7" transform="rotate(225 1312.1 702.2)"/><rect x="1310.3999999999999" y="694.4000000000001" width="3.400" height="4" rx=".7" transform="rotate(270 1312.1 702.2)"/><rect x="1310.3999999999999" y="694.4000000000001" width="3.400" height="4" rx=".7" transform="rotate(315 1312.1 702.2)"/></g><circle cx="1312.1" cy="702.2" r="5.600" fill="#dcdee0"/>
<circle cx="1312.1" cy="702.2" r="4.400" fill="url(#igc)"/><path d="M1310.6999999999998 701.0 h3 l-1.500 2.900z" fill="#f4f7fc"/>
<rect x="324.300" y="525.500" width="22" height="22.500" fill="#c8d0f0" opacity=".55"/>
<clipPath id="cdip"><rect x="324.300" y="525.400" width="22" height="22.600"/></clipPath>
<path d="M326.8 548 C327.0 541.8 335.5 532.0 336 531 M325.1 548 C325.5 538.0 335.2 532.6 336 531 M323.4 548 C324.0 534.2 334.9 533.2 336 531 M321.8 548 C322.5 530.5 334.6 533.8 336 531 M320.1 548 C321.0 526.8 334.3 534.4 336 531 M338.5 548 C338.5 537.2 339.5 533.0 336.500 530.500 M340.5 548 C340.5 536.6 340.7 533.0 336.500 530.500 M342.5 548 C342.5 536.0 341.9 533.0 336.500 530.500 M344.5 548 C344.5 535.5 343.1 533.0 336.500 530.500 M325 527 L334 530 M346 526.500 L338 530 M325 533 C329 531 333 531 336 531 M346.300 533 C343 531 339 531 336 531 M328 526 L334 529 M342 526 L338 529" fill="none" stroke="#7484d8" stroke-width=".7" opacity=".9" clip-path="url(#cdip)"/>
<ellipse cx="336.700" cy="528.800" rx="2.600" ry="1.800" fill="#2a3ad0"/><ellipse cx="336" cy="533.500" rx="1.800" ry="1.300" fill="#2a3ad0"/><circle cx="336" cy="531" r="1" fill="#8ab060"/>
<path d="M332.300 541 L335.600 532.800" stroke="#222" stroke-width=".9"/><circle cx="329.600" cy="544.300" r="3.900" fill="#0a0ac0"/><circle cx="328.700" cy="542.800" r=".8" fill="#8a98f0"/>
<ellipse cx="622.500" cy="533.700" rx="6.200" ry="4.100" transform="rotate(30 622.500 533.700)" fill="url(#ired)"/>
<ellipse cx="630.600" cy="531.400" rx="3.700" ry="4.300" fill="url(#icy)"/>
<ellipse cx="634.300" cy="540.300" rx="5.300" ry="4.200" transform="rotate(35 634.300 540.300)" fill="url(#iora)"/>
<ellipse cx="625.700" cy="541.600" rx="4" ry="5.400" transform="rotate(22 625.700 541.600)" fill="url(#idb)"/>
<circle cx="930" cy="537.05" r="10.800" fill="#161616"/><path d="M927.10 537.05 L920.70 537.05 A9.3 9.3 0 0 1 925.35 529.00 L928.55 534.54 A2.9 2.9 0 0 0 927.10 537.05Z" fill="#f0cc3c"/><path d="M931.45 534.54 L934.65 529.00 A9.3 9.3 0 0 1 939.30 537.05 L932.90 537.05 A2.9 2.9 0 0 0 931.45 534.54Z" fill="#f0cc3c"/><path d="M931.45 539.56 L934.65 545.10 A9.3 9.3 0 0 1 925.35 545.10 L928.55 539.56 A2.9 2.9 0 0 0 931.45 539.56Z" fill="#f0cc3c"/><circle cx="930" cy="537.05" r="1.900" fill="#f0cc3c"/>
<circle cx="1214.3" cy="537.05" r="10.800" fill="#161616"/><path d="M1211.40 537.05 L1205.00 537.05 A9.3 9.3 0 0 1 1209.65 529.00 L1212.85 534.54 A2.9 2.9 0 0 0 1211.40 537.05Z" fill="#f0cc3c"/><path d="M1215.75 534.54 L1218.95 529.00 A9.3 9.3 0 0 1 1223.60 537.05 L1217.20 537.05 A2.9 2.9 0 0 0 1215.75 534.54Z" fill="#f0cc3c"/><path d="M1215.75 539.56 L1218.95 545.10 A9.3 9.3 0 0 1 1209.65 545.10 L1212.85 539.56 A2.9 2.9 0 0 0 1215.75 539.56Z" fill="#f0cc3c"/><circle cx="1214.3" cy="537.05" r="1.900" fill="#f0cc3c"/>
<ellipse cx="35" cy="958" rx="8" ry=".8" fill="#8a949c" opacity=".6"/><circle cx="35" cy="947.600" r="9.600" fill="url(#iinf)" stroke="#2a7ade" stroke-width=".7"/>
<circle cx="35.100" cy="942.600" r="1.600" fill="#fff"/><path d="M32.600 946.200 h4 v7.600 h1.300 v1.200 h-5.600 v-1.200 h1.400 v-6.300 h-1.100z" fill="#fff"/>
<g id="bfly">
<path d="M1254.4 943.4 L1253.3 937.1 L1251.6 934.6 L1244.7 934.0 L1244.4 930.3 L1242.4 930.3 L1241.9 934.3 L1239.6 935.4 L1236.1 938.3 L1235.0 941.1 L1234.4 944.0 L1229.9 945.1 L1225.3 948.0 L1220.7 951.4 L1221.3 953.1 L1226.4 954.6 L1235.0 954.9 L1243.6 953.7 L1249.3 952.6 L1254.4 952.0Z M1255.6 943.4 L1256.1 937.1 L1258.4 934.6 L1264.1 934.0 L1263.9 930.3 L1265.9 930.6 L1266.7 934.3 L1269.9 936.0 L1272.7 938.9 L1275.0 942.3 L1277.9 944.0 L1282.4 946.9 L1287.0 950.3 L1289.9 952.6 L1288.7 954.3 L1282.4 955.1 L1272.1 954.9 L1263.6 953.1 L1258.4 952.0 L1255.6 951.4Z" fill="#0b0b0d" stroke="#0b0b0d" stroke-width=".6" stroke-linejoin="round"/>
<g filter="url(#fbl)"><path d="M1252.1 938.3 L1247.0 938.9 L1241.9 941.1 L1240.1 943.4 L1244.7 945.1 L1237.9 948.0 L1235.0 950.3 L1236.7 952.6 L1243.6 951.4 L1250.4 949.1 L1253.3 946.9Z" fill="url(#ibl)"/><path d="M1256.7 938.3 L1262.4 938.9 L1268.1 941.1 L1269.3 943.4 L1266.4 945.7 L1272.1 949.1 L1276.1 951.4 L1275.0 953.7 L1269.3 952.6 L1262.4 950.3 L1257.3 947.4Z" fill="url(#ibr)"/></g>
<path d="M1254.800 943.500 V952.500" stroke="#2a1c18" stroke-width="1.600"/><path d="M1254 952 L1250.500 957.300 M1256 952 L1262.500 957.300" stroke="#b8a098" stroke-width=".5"/><circle cx="1250.500" cy="957.500" r=".6" fill="#6a5a58"/>
</g>
</svg>
<div class="sb" style="left:1px;top:979px;width:798px"></div>
<div class="sb" style="left:802px;top:979px;width:197px"></div>
<div class="sb" style="left:1002px;top:979px;width:397px"></div>
<div class="abs" style="left:0;top:1001px;width:1400px;height:3px;background:linear-gradient(#fff,#d9dee7)"></div>
<div class="t" style="left:4.28px;top:983px;font-size:13px;line-height:15px;letter-spacing:-0.127px;">(C) 2001-2012 the relax development team</div>
<div class="t" style="left:804.67px;top:983px;font-size:13px;line-height:15px;letter-spacing:-0.108px;">Current data pipe:</div>
<div class="t" style="left:1004.60px;top:983px;font-size:13px;line-height:15px;letter-spacing:-0.247px;">final</div>
</div>
</body></html>
